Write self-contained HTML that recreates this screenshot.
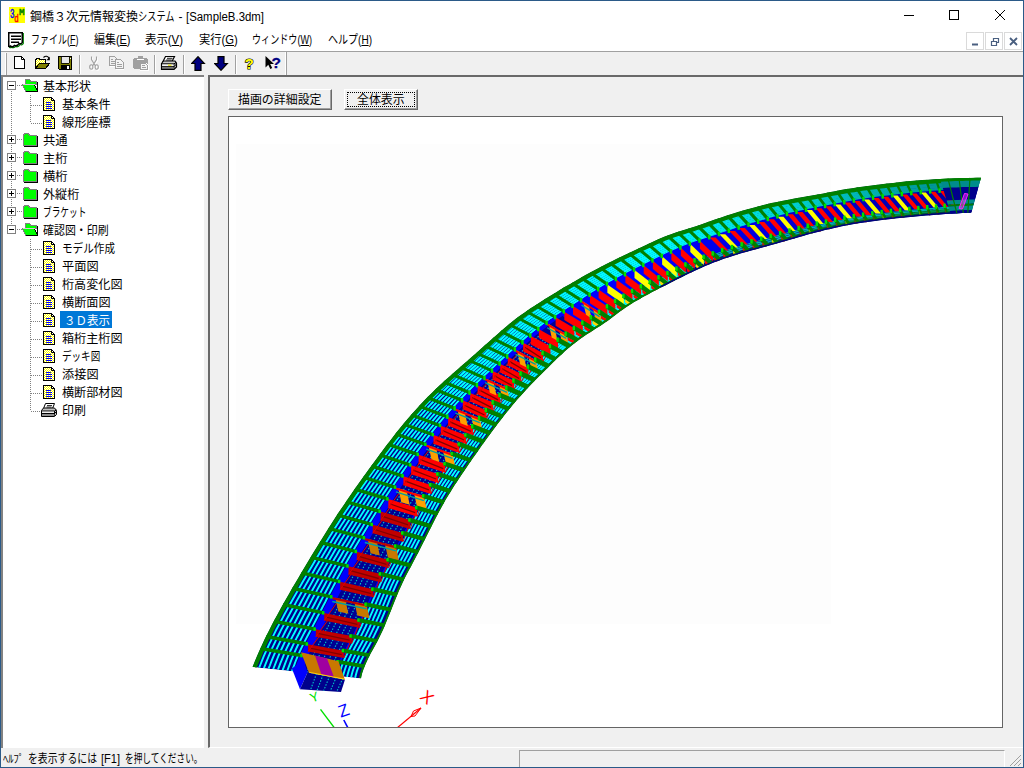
<!DOCTYPE html>
<html lang="ja"><head><meta charset="utf-8"><title>鋼橋３次元情報変換システム - [SampleB.3dm]</title>
<style>
*{box-sizing:border-box;margin:0;padding:0}
html,body{width:1024px;height:768px;overflow:hidden;background:#f0f0f0}
body{font-family:"Liberation Sans","Noto Sans CJK JP",sans-serif;font-size:12px;color:#000;position:relative}
.abs{position:absolute}
.tx{position:absolute;white-space:nowrap;line-height:18px;height:18px;transform-origin:0 50%;display:inline-block}
.tx u{text-decoration:underline;text-underline-offset:1px}
#frame{position:absolute;left:0;top:0;width:1024px;height:768px;border:1px solid #2b5a88;pointer-events:none}
#title{position:absolute;left:1px;top:1px;width:1022px;height:30px;background:#fff}
#menu{position:absolute;left:1px;top:31px;width:1022px;height:20px;background:#fff}
#tbline{position:absolute;left:1px;top:51px;width:1022px;height:1px;background:#a0a0a0}
.sep{position:absolute;top:55px;width:2px;height:19px;border-left:1px solid #a0a0a0;border-right:1px solid #fff}
#tree{position:absolute;left:1px;top:75px;width:203px;height:673px;background:#fff;border-top:2px solid #828282;border-left:2px solid #828282}
#right{position:absolute;left:208px;top:75px;width:815px;height:673px;background:#f0f0f0;border-top:2px solid #696969;border-left:2px solid #696969;border-bottom:1px solid #fff}
#view{position:absolute;left:228px;top:116px;width:775px;height:612px;background:#fff;border:1px solid #646464;overflow:hidden}
.btn{position:absolute;height:21px;background:#f0f0f0;border-top:1px solid #fff;border-left:1px solid #fff;border-right:1px solid #696969;border-bottom:1px solid #696969}
.btn i{position:absolute;left:0;top:0;right:0;bottom:0;border-right:1px solid #a0a0a0;border-bottom:1px solid #a0a0a0}
#status{position:absolute;left:1px;top:748px;width:1022px;height:19px;background:#f0f0f0}
</style></head><body>
<svg width="0" height="0" style="position:absolute"><defs>
<pattern id="hy" width="2" height="2" patternUnits="userSpaceOnUse"><rect width="2" height="2" fill="#ffff00"/><rect width="1" height="1" fill="#fff"/><rect x="1" y="1" width="1" height="1" fill="#fff"/></pattern>
<g id="ic-menu"><path d="M1.750 1.750H15.250V11.500C14.500 13 13 13 12 12.500C11 14.500 9 15 7.500 14.500C6.500 16 4.500 16 3.500 15C2.800 15.800 2.200 15.800 1.750 15.500Z" fill="none" stroke="#008000" stroke-width="1.300"/><path d="M.75.750H14.250V10.500C13.500 12 12 12 11 11.500C10 13.500 8 14 6.500 13.500C5.500 15 3.500 15 2.500 14C1.800 14.800 1.200 14.800.750 14.500Z" fill="#fff" stroke="#000" stroke-width="1.500"/><path d="M3 4.250H13M3 7.250H13M3 10.250H11" stroke="#000" stroke-width="1.500"/></g>
<g id="ic-mdi"><rect x=".5" y=".5" width="17" height="17" fill="#fff" stroke="#dadada"/><rect x="19.5" y=".5" width="17" height="17" fill="#fff" stroke="#dadada"/><rect x="38.500" y=".5" width="17" height="17" fill="#fff" stroke="#dadada"/><path d="M6 12.500h6" stroke="#4a5f80" stroke-width="2"/><path d="M25.500 9.500h5v4h-5zM27.500 9v-2.500h5v4h-2" fill="none" stroke="#4a5f80" stroke-width="1.200"/><path d="M44 6l7 7M51 6l-7 7" stroke="#4a5f80" stroke-width="1.800"/></g>
<g id="ic-grip" stroke="#a0a0a0" stroke-width="1"><path d="M13 2L2 13M13 6L6 13M13 10L10 13"/></g>
<g id="ic-open" shape-rendering="crispEdges"><path d="M3.500 1.500h4l1 1.500h6v3.500h-11z" fill="#00ff00" stroke="#808080"/><path d="M15.500 4v9.500h-11" fill="none" stroke="#000" stroke-width="1.500"/><path d="M0.500 6.500h12l3 7h-12z" fill="#00ff00" stroke="#808080"/><path d="M12.500 6.500l3 7h-12" fill="none" stroke="#000"/><path d="M1 6.500h11.500" stroke="#d8c8d8"/></g>
<g id="ic-closed" shape-rendering="crispEdges"><path d="M1.500 3.500l1-2h4l1 2h7v9.500h-13z" fill="#00ff00" stroke="#808080"/><path d="M15.500 4v10h-13.500" fill="none" stroke="#000"/></g>
<g id="ic-doc" shape-rendering="crispEdges"><path d="M.5.500h8l3 3v10h-11z" fill="url(#hy)" stroke="#000"/><path d="M8.500.5l3 3h-3z" fill="#fff" stroke="#000" shape-rendering="auto"/><path d="M3 5.500h5M3 7.500h6M3 9.500h6M3 11.500h6" stroke="#0000ff"/></g>
<g id="ic-print"><path d="M5.500 1.500h9l-2 5h-9z" fill="#fff" stroke="#000"/><path d="M7 3.500h5M6.500 5h5" stroke="#000" stroke-width=".8"/><path d="M1.500 8.500l2-2.500h11l2 2.500v4l-2 2h-13z" fill="#c0c0c0" stroke="#000"/><path d="M1.500 9h13l2-1M1.500 11.500h13l2-2M14.500 9v5" stroke="#000" fill="none"/><path d="M2 10.200h12" stroke="#fff"/><path d="M2 13h12.500" stroke="#808080" stroke-width="1.600"/></g>
<g id="tb-new" shape-rendering="crispEdges"><path d="M.5.500h7l3 3v9h-10z" fill="#fff" stroke="#000"/><path d="M7.500.5l3 3h-3z" fill="#fff" stroke="#000" shape-rendering="auto"/></g>
<g id="tb-open"><g shape-rendering="crispEdges"><path d="M.5 13.500v-9h1v-1h3v1h6v3" fill="url(#hy)" stroke="#000"/><path d="M.5 13.500h10l4.500-5.500h-10.500z" fill="#808000" stroke="#000"/></g><path d="M8.500 2.500c2-2 4.500-1.500 5.500 1" fill="none" stroke="#000" stroke-width="1.100"/><path d="M14.800 1.800v3.400h-3.400z" fill="#000"/></g>
<g id="tb-save" shape-rendering="crispEdges"><path d="M.5.500h13v13h-12l-1-1z" fill="#808000" stroke="#000"/><rect x="3" y="1" width="8" height="5.500" fill="#e8e8e8"/><path d="M3 1v6h8v-6" fill="none" stroke="#000" stroke-width=".8"/><rect x="12" y="1.500" width="1" height="1" fill="#fff"/><rect x="3" y="8.500" width="9" height="5" fill="#000"/><rect x="9" y="9.500" width="2" height="3" fill="#fff"/></g>
<g id="tb-cut" fill="none" stroke-width="1.100"><g stroke="#fff" transform="translate(1,1)"><path d="M2.500.5v3l4 6.500M7.500.5v3l-4 6.500"/><ellipse cx="2.300" cy="11" rx="1.600" ry="2.200"/><ellipse cx="7.700" cy="11" rx="1.600" ry="2.200"/></g><g stroke="#a0a0a0"><path d="M2.500.5v3l4 6.500M7.500.5v3l-4 6.500"/><ellipse cx="2.300" cy="11" rx="1.600" ry="2.200"/><ellipse cx="7.700" cy="11" rx="1.600" ry="2.200"/></g></g>
<g id="tb-copy" shape-rendering="crispEdges"><path d="M1.500 1.500h5l2 2v7h-7z" fill="#f8f8f8" stroke="#fff"/><path d="M.5.500h5l2 2v7h-7z" fill="#f0f0f0" stroke="#a0a0a0"/><path d="M2 3.500h2M2 5.500h4M2 7.500h4" stroke="#a0a0a0"/><path d="M7.500 4.500h5l2 2v7h-7z" fill="#fff" stroke="#fff"/><path d="M6.500 3.500h5l3 3v6h-8z" fill="#f4f4f4" stroke="#a0a0a0"/><path d="M8 6.500h2M8 8.500h5M8 10.500h5" stroke="#a0a0a0"/></g>
<g id="tb-paste" shape-rendering="crispEdges"><path d="M1 2h13v10.500h-13z" fill="#a0a0a0"/><path d="M0 3h15v8.500h-15z" fill="#a0a0a0"/><rect x="5" y="0" width="5" height="2" fill="#a0a0a0"/><rect x="4" y="3" width="6.500" height="1.200" fill="#fff"/><path d="M7.500 7.500h5l2 2v4h-7z" fill="#f4f4f4" stroke="#fff" stroke-width="2"/><path d="M7.500 7.500h5l2 2v4h-7z" fill="#f4f4f4" stroke="#a0a0a0"/><path d="M9 9.500h3M9 11.500h4" stroke="#a0a0a0"/></g>
<g id="tb-print"><path d="M5.500 1.500h9l-2.500 5h-9z" fill="#fff" stroke="#000" stroke-width="1.200"/><path d="M7 3.300h5.500M6.200 5h5.500" stroke="#000" stroke-width=".9"/><path d="M1.500 8.500l2-2.500h11.500l1.500 2.500v3.500l-2.500 2.500h-12.500z" fill="#c8c8c8" stroke="#000" stroke-width="1.200"/><path d="M1.500 8.800h12.500l2.500-1.500M1.500 11.700h12.500l2.500-2.700M14 9v5" stroke="#000" fill="none"/><path d="M2.200 10.200h11.500" stroke="#fff" stroke-width="1.200"/><path d="M8 10.200h3.500" stroke="#e8e000" stroke-width="1.200"/><path d="M2 13.200h12" stroke="#606060" stroke-width="1.600"/></g>
<g id="tb-up"><path d="M7 .7l6.300 6.800h-3.300v6.800h-6v-6.800h-3.300z" fill="#000080" stroke="#000" stroke-width="1.200" stroke-linejoin="miter"/></g>
<g id="tb-down"><path d="M7 14.300l6.300-6.800h-3.300v-6.800h-6v6.800h-3.300z" fill="#000080" stroke="#000" stroke-width="1.200" stroke-linejoin="miter"/></g>
<g id="tb-help"><text x="0.800" y="13" font-family="Liberation Sans,sans-serif" font-weight="bold" font-size="15.5" fill="#ffff00" stroke="#000" stroke-width="1.200" paint-order="stroke" textLength="9" lengthAdjust="spacingAndGlyphs">?</text></g>
<g id="tb-ctx"><path d="M1.500 1v11.500l2.800-2.800 2 4.300 1.900-.9-2-4.200h3.800z" fill="#000"/><text x="7.500" y="12.500" font-family="Liberation Sans,sans-serif" font-weight="bold" font-size="15.500" fill="#000080" stroke="#000080" stroke-width=".3">?</text></g>

</defs></svg>
<div id="title">
<svg class="abs" style="left:8px;top:6px" width="16" height="16" viewBox="0 0 16 16"><rect width="16" height="16" fill="#ffff00"/><text x="1" y="11" font-family="Liberation Mono,monospace" font-size="12" fill="#0000ff" stroke="#0000ff" stroke-width=".5" textLength="4.5" lengthAdjust="spacingAndGlyphs">3</text><text x="5.2" y="15" font-family="Liberation Mono,monospace" font-size="11" fill="#ff0000" stroke="#ff0000" stroke-width=".5" textLength="4.5" lengthAdjust="spacingAndGlyphs">d</text><text x="10" y="8" font-family="Liberation Mono,monospace" font-size="9.5" fill="#008000" stroke="#008000" stroke-width=".5" textLength="5.5" lengthAdjust="spacingAndGlyphs">M</text></svg>
<svg class="abs" style="left:889px;top:-1px" width="132" height="30" viewBox="0 0 132 30" fill="none" stroke="#000" stroke-width="1"><path d="M14 15.5h10"/><rect x="59.5" y="10.5" width="9" height="9"/><path d="M105 10l10 10M115 10l-10 10"/></svg>
</div>
<div id="menu">
<svg class="abs" style="left:7px;top:1px" width="18" height="18"><use href="#ic-menu"/></svg>
<svg class="abs" style="left:965px;top:1px" width="56" height="19"><use href="#ic-mdi"/></svg>
</div>
<div id="tbline"></div>
<div class="abs" style="left:5px;top:53px;width:2px;height:22px;border-left:1px solid #fff;border-right:1px solid #a0a0a0"></div>
<svg class="abs" style="left:14px;top:56px" width="12" height="14"><use href="#tb-new"/></svg>
<svg class="abs" style="left:35px;top:55px" width="17" height="15"><use href="#tb-open"/></svg>
<svg class="abs" style="left:58px;top:56px" width="15" height="14"><use href="#tb-save"/></svg>
<svg class="abs" style="left:89px;top:56px" width="11" height="15"><use href="#tb-cut"/></svg>
<svg class="abs" style="left:109px;top:56px" width="17" height="15"><use href="#tb-copy"/></svg>
<svg class="abs" style="left:133px;top:56px" width="16" height="15"><use href="#tb-paste"/></svg>
<svg class="abs" style="left:160px;top:55px" width="18" height="16"><use href="#tb-print"/></svg>
<svg class="abs" style="left:191px;top:56px" width="15" height="15"><use href="#tb-up"/></svg>
<svg class="abs" style="left:214px;top:56px" width="15" height="15"><use href="#tb-down"/></svg>
<svg class="abs" style="left:244px;top:56px" width="11" height="14"><use href="#tb-help"/></svg>
<svg class="abs" style="left:264px;top:55px" width="18" height="16"><use href="#tb-ctx"/></svg>
<div class="sep" style="left:79px"></div>
<div class="sep" style="left:154px"></div>
<div class="sep" style="left:183px"></div>
<div class="sep" style="left:235px"></div>
<div class="abs" style="left:285px;top:52px;width:2px;height:23px;border-left:1px solid #fff;border-right:1px solid #a0a0a0"></div>
<div id="tree"></div>
<div id="right"></div>
<svg class="abs" style="left:0;top:0" width="210" height="440" shape-rendering="crispEdges"><g stroke="#808080" stroke-width="1" stroke-dasharray="1 1"><line x1="11.5" y1="91" x2="11.5" y2="225"/><line x1="30.5" y1="95" x2="30.5" y2="122"/><line x1="30.5" y1="239" x2="30.5" y2="410"/><line x1="17" y1="85.5" x2="22" y2="85.5"/><line x1="31" y1="105.5" x2="42" y2="105.5"/><line x1="31" y1="123.5" x2="42" y2="123.5"/><line x1="17" y1="139.5" x2="22" y2="139.5"/><line x1="17" y1="157.5" x2="22" y2="157.5"/><line x1="17" y1="175.5" x2="22" y2="175.5"/><line x1="17" y1="193.5" x2="22" y2="193.5"/><line x1="17" y1="211.5" x2="22" y2="211.5"/><line x1="17" y1="229.5" x2="22" y2="229.5"/><line x1="31" y1="249.5" x2="42" y2="249.5"/><line x1="31" y1="267.5" x2="42" y2="267.5"/><line x1="31" y1="285.5" x2="42" y2="285.5"/><line x1="31" y1="303.5" x2="42" y2="303.5"/><line x1="31" y1="321.5" x2="42" y2="321.5"/><line x1="31" y1="339.5" x2="42" y2="339.5"/><line x1="31" y1="357.5" x2="42" y2="357.5"/><line x1="31" y1="375.5" x2="42" y2="375.5"/><line x1="31" y1="393.5" x2="42" y2="393.5"/><line x1="31" y1="411.5" x2="42" y2="411.5"/></g></svg>
<svg class="abs" style="left:7px;top:81px" width="9" height="9" shape-rendering="crispEdges"><rect x=".5" y=".5" width="8" height="8" fill="#fff" stroke="#808080"/><path d="M2 4.5h5" stroke="#000"/></svg>
<svg class="abs" style="left:22px;top:78px" width="17" height="16"><use href="#ic-open"/></svg>
<svg class="abs" style="left:43px;top:97px" width="13" height="15"><use href="#ic-doc"/></svg>
<svg class="abs" style="left:43px;top:115px" width="13" height="15"><use href="#ic-doc"/></svg>
<svg class="abs" style="left:7px;top:135px" width="9" height="9" shape-rendering="crispEdges"><rect x=".5" y=".5" width="8" height="8" fill="#fff" stroke="#808080"/><path d="M2 4.5h5" stroke="#000"/><path d="M4.5 2v5" stroke="#000"/></svg>
<svg class="abs" style="left:22px;top:132px" width="17" height="16"><use href="#ic-closed"/></svg>
<svg class="abs" style="left:7px;top:153px" width="9" height="9" shape-rendering="crispEdges"><rect x=".5" y=".5" width="8" height="8" fill="#fff" stroke="#808080"/><path d="M2 4.5h5" stroke="#000"/><path d="M4.5 2v5" stroke="#000"/></svg>
<svg class="abs" style="left:22px;top:150px" width="17" height="16"><use href="#ic-closed"/></svg>
<svg class="abs" style="left:7px;top:171px" width="9" height="9" shape-rendering="crispEdges"><rect x=".5" y=".5" width="8" height="8" fill="#fff" stroke="#808080"/><path d="M2 4.5h5" stroke="#000"/><path d="M4.5 2v5" stroke="#000"/></svg>
<svg class="abs" style="left:22px;top:168px" width="17" height="16"><use href="#ic-closed"/></svg>
<svg class="abs" style="left:7px;top:189px" width="9" height="9" shape-rendering="crispEdges"><rect x=".5" y=".5" width="8" height="8" fill="#fff" stroke="#808080"/><path d="M2 4.5h5" stroke="#000"/><path d="M4.5 2v5" stroke="#000"/></svg>
<svg class="abs" style="left:22px;top:186px" width="17" height="16"><use href="#ic-closed"/></svg>
<svg class="abs" style="left:7px;top:207px" width="9" height="9" shape-rendering="crispEdges"><rect x=".5" y=".5" width="8" height="8" fill="#fff" stroke="#808080"/><path d="M2 4.5h5" stroke="#000"/><path d="M4.5 2v5" stroke="#000"/></svg>
<svg class="abs" style="left:22px;top:204px" width="17" height="16"><use href="#ic-closed"/></svg>
<svg class="abs" style="left:7px;top:225px" width="9" height="9" shape-rendering="crispEdges"><rect x=".5" y=".5" width="8" height="8" fill="#fff" stroke="#808080"/><path d="M2 4.5h5" stroke="#000"/></svg>
<svg class="abs" style="left:22px;top:222px" width="17" height="16"><use href="#ic-open"/></svg>
<svg class="abs" style="left:43px;top:241px" width="13" height="15"><use href="#ic-doc"/></svg>
<svg class="abs" style="left:43px;top:259px" width="13" height="15"><use href="#ic-doc"/></svg>
<svg class="abs" style="left:43px;top:277px" width="13" height="15"><use href="#ic-doc"/></svg>
<svg class="abs" style="left:43px;top:295px" width="13" height="15"><use href="#ic-doc"/></svg>
<svg class="abs" style="left:43px;top:313px" width="13" height="15"><use href="#ic-doc"/></svg>
<div class="abs" style="left:60px;top:311px;width:52px;height:17px;background:#0078d7"></div>
<svg class="abs" style="left:43px;top:331px" width="13" height="15"><use href="#ic-doc"/></svg>
<svg class="abs" style="left:43px;top:349px" width="13" height="15"><use href="#ic-doc"/></svg>
<svg class="abs" style="left:43px;top:367px" width="13" height="15"><use href="#ic-doc"/></svg>
<svg class="abs" style="left:43px;top:385px" width="13" height="15"><use href="#ic-doc"/></svg>
<svg class="abs" style="left:40px;top:402px" width="18" height="16"><use href="#ic-print"/></svg>
<div class="btn" style="left:228px;top:89px;width:104px"><i></i></div>
<div class="btn" style="left:344px;top:89px;width:74px"><i></i><div style="position:absolute;left:2px;top:2px;right:2px;bottom:2px;border:1px dotted #000"></div></div>
<div id="view">
<svg class="abs" style="left:0;top:0" width="773" height="610" viewBox="0 0 773 610"><defs><linearGradient id="gcy" gradientUnits="userSpaceOnUse" x1="421" y1="0" x2="731" y2="0"><stop offset="0" stop-color="#00ffff"/><stop offset=".4" stop-color="#00d8d8"/><stop offset="1" stop-color="#008c8c"/></linearGradient>
<linearGradient id="gbl" gradientUnits="userSpaceOnUse" x1="421" y1="0" x2="731" y2="0"><stop offset="0" stop-color="#0000ff"/><stop offset="1" stop-color="#0000a0"/></linearGradient></defs>
<rect x="7" y="27" width="595" height="480" fill="#fdfdfd"/>
<clipPath id="dk"><polygon points="23.5,550 25.7,544.5 28,539.1 30.3,533.7 32.7,528.4 35.2,523.1 37.8,517.8 40.5,512.5 43.1,507.3 45.9,502.1 48.7,496.9 51.5,491.8 54.4,486.6 57.3,481.5 60.2,476.4 63.1,471.3 66.1,466.2 69.1,461.2 72.1,456.1 75.1,451 78.1,446 81.1,440.9 84.1,435.9 87.2,430.9 90.3,425.9 93.4,420.9 96.5,415.9 99.6,410.9 102.8,406 106,401.1 109.2,396.1 112.5,391.3 115.8,386.4 119.1,381.5 122.4,376.7 125.8,371.8 129.2,367 132.6,362.2 136,357.5 139.4,352.7 142.9,347.9 146.4,343.2 149.9,338.5 153.4,333.7 156.9,329 160.5,324.4 164.1,319.7 167.7,315.1 171.4,310.5 175.1,306 178.9,301.5 182.8,297 186.7,292.7 190.7,288.3 194.7,284 198.8,279.8 203,275.7 207.2,271.6 211.5,267.6 215.8,263.6 220.2,259.7 224.6,255.8 229,251.9 233.4,248 237.9,244.2 242.3,240.3 246.7,236.4 251.1,232.5 255.5,228.6 259.9,224.7 264.3,220.8 268.7,216.9 273.1,213 277.6,209.2 282.1,205.4 286.7,201.8 291.5,198.3 296.3,194.9 301.1,191.6 306,188.4 311,185.2 316,182.1 320.9,179 326,175.9 331,172.8 336,169.8 341.1,166.9 346.2,163.9 351.3,161 356.4,158.1 361.6,155.3 366.8,152.5 372,149.7 377.2,147 382.4,144.4 387.7,141.8 393,139.2 398.3,136.7 403.6,134.2 408.9,131.7 414.3,129.2 419.6,126.7 424.9,124.2 430.3,121.8 435.7,119.5 441.2,117.4 446.7,115.5 452.3,113.7 458,111.9 463.6,110.2 469.2,108.4 474.7,106.5 480.3,104.6 485.8,102.6 491.4,100.7 497,98.8 502.6,97 508.2,95.3 513.8,93.6 519.5,92 525.1,90.4 530.8,88.9 536.5,87.5 542.2,86.1 548,84.9 553.8,83.7 559.5,82.7 565.3,81.6 571.1,80.6 576.9,79.6 582.7,78.5 588.5,77.5 594.3,76.4 600,75.3 605.8,74.2 611.6,73.1 617.4,72.1 623.2,71.2 629,70.3 634.8,69.5 640.6,68.7 646.5,67.9 652.3,67.2 658.2,66.5 664,65.9 669.8,65.2 675.7,64.6 681.5,64.1 687.4,63.6 693.3,63.1 699.1,62.7 705,62.3 710.9,62 716.7,61.7 722.6,61.4 728.5,61.2 734.4,61 740.2,60.9 746.1,60.8 752,60.8 742.4,95.6 740.5,95.7 738.5,95.8 736.3,95.9 733.6,96.1 730.3,96.2 726.1,96.5 721.5,96.8 716.7,97.1 711.9,97.4 707,97.8 702.1,98.2 697,98.6 691.9,99 686.8,99.5 681.5,100 676.3,100.5 671,101 665.6,101.6 660.3,102.2 654.9,102.8 649.5,103.4 644.1,104.2 638.7,104.9 633.2,105.7 627.8,106.6 622.5,107.5 617.1,108.5 611.8,109.6 606.6,110.7 601.3,111.9 596.1,113.1 591,114.4 585.8,115.7 580.7,117.1 575.6,118.5 570.5,119.9 565.3,121.4 560.1,123 554.8,124.5 549.5,126 544.2,127.5 538.8,129 533.4,130.5 527.9,132 522.4,133.5 516.9,135 511.4,136.6 506,138.2 500.7,139.9 495.5,141.6 490.4,143.4 485.4,145.3 480.5,147.3 475.7,149.3 470.8,151.5 465.9,153.7 461,156 456.2,158.3 451.4,160.7 446.6,163.1 441.9,165.5 437.1,167.9 432.4,170.3 427.7,172.8 422.9,175.3 418.3,177.8 413.6,180.3 409,182.9 404.4,185.6 399.9,188.4 395.6,191.3 391.4,194.2 387.3,197.3 383.2,200.4 379.1,203.5 374.8,206.5 370.3,209.4 365.8,212.3 361.3,215.2 356.8,218.1 352.5,221.1 348.2,224.3 344,227.5 339.9,230.8 335.9,234.3 332,237.9 328.1,241.5 324.3,245.2 320.6,248.9 316.8,252.7 313,256.4 309.2,260.2 305.5,263.9 301.9,267.7 298.3,271.5 294.8,275.4 291.3,279.2 287.9,283.1 284.5,287.1 281.3,291 278,295 274.8,299.1 271.6,303.2 268.4,307.3 265.3,311.5 262.1,315.7 259,320 255.9,324.3 252.8,328.6 249.7,333 246.6,337.4 243.5,341.8 240.4,346.3 237.4,350.7 234.3,355.2 231.3,359.7 228.3,364.2 225.3,368.8 222.4,373.4 219.6,378 216.8,382.6 214.2,387.3 211.6,392 209,396.7 206.5,401.4 204.1,406.2 201.7,411 199.3,415.7 196.9,420.5 194.5,425.3 192.1,430.1 189.6,434.9 187.2,439.6 184.6,444.4 182.1,449.2 179.5,453.9 177,458.7 174.6,463.5 172.4,468.4 170.2,473.2 168.2,478.1 166.2,483 164.2,487.9 162.3,492.8 160.3,497.7 158.3,502.6 156.3,507.5 154.2,512.4 151.9,517.3 149.6,522.1 147,526.9 144.4,531.8 141.7,536.6 139.2,541.5 136.9,546.5 134.8,551.5 133.1,556.6 132,561.4 132,561.4"/></clipPath><g clip-path="url(#dk)">
<polygon points="23.5,550 25.7,544.5 28,539.1 30.3,533.7 32.7,528.4 35.2,523.1 37.8,517.8 40.5,512.5 43.1,507.3 45.9,502.1 48.7,496.9 51.5,491.8 54.4,486.6 57.3,481.5 60.2,476.4 63.1,471.3 66.1,466.2 69.1,461.2 72.1,456.1 75.1,451 78.1,446 81.1,440.9 84.1,435.9 87.2,430.9 90.3,425.9 93.4,420.9 96.5,415.9 99.6,410.9 102.8,406 106,401.1 109.2,396.1 112.5,391.3 115.8,386.4 119.1,381.5 122.4,376.7 125.8,371.8 129.2,367 132.6,362.2 136,357.5 139.4,352.7 142.9,347.9 146.4,343.2 149.9,338.5 153.4,333.7 156.9,329 160.5,324.4 164.1,319.7 167.7,315.1 171.4,310.5 175.1,306 178.9,301.5 182.8,297 186.7,292.7 190.7,288.3 194.7,284 198.8,279.8 203,275.7 207.2,271.6 211.5,267.6 215.8,263.6 220.2,259.7 224.6,255.8 229,251.9 233.4,248 237.9,244.2 242.3,240.3 246.7,236.4 251.1,232.5 255.5,228.6 259.9,224.7 264.3,220.8 268.7,216.9 273.1,213 277.6,209.2 282.1,205.4 286.7,201.8 291.5,198.3 296.3,194.9 301.1,191.6 306,188.4 311,185.2 316,182.1 320.9,179 326,175.9 331,172.8 336,169.8 341.1,166.9 346.2,163.9 351.3,161 356.4,158.1 361.6,155.3 366.8,152.5 372,149.7 377.2,147 382.4,144.4 387.7,141.8 393,139.2 398.3,136.7 403.6,134.2 408.9,131.7 414.3,129.2 419.6,126.7 424.9,124.2 430.3,121.8 435.7,119.5 441.2,117.4 446.7,115.5 452.3,113.7 458,111.9 463.6,110.2 469.2,108.4 474.7,106.5 480.3,104.6 485.8,102.6 491.4,100.7 497,98.8 502.6,97 508.2,95.3 513.8,93.6 519.5,92 525.1,90.4 530.8,88.9 536.5,87.5 542.2,86.1 548,84.9 553.8,83.7 559.5,82.7 565.3,81.6 571.1,80.6 576.9,79.6 582.7,78.5 588.5,77.5 594.3,76.4 600,75.3 605.8,74.2 611.6,73.1 617.4,72.1 623.2,71.2 629,70.3 634.8,69.5 640.6,68.7 646.5,67.9 652.3,67.2 658.2,66.5 664,65.9 669.8,65.2 675.7,64.6 681.5,64.1 687.4,63.6 693.3,63.1 699.1,62.7 705,62.3 710.9,62 716.7,61.7 722.6,61.4 728.5,61.2 734.4,61 740.2,60.9 746.1,60.8 752,60.8 742.4,95.6 740.5,95.7 738.5,95.8 736.3,95.9 733.6,96.1 730.3,96.2 726.1,96.5 721.5,96.8 716.7,97.1 711.9,97.4 707,97.8 702.1,98.2 697,98.6 691.9,99 686.8,99.5 681.5,100 676.3,100.5 671,101 665.6,101.6 660.3,102.2 654.9,102.8 649.5,103.4 644.1,104.2 638.7,104.9 633.2,105.7 627.8,106.6 622.5,107.5 617.1,108.5 611.8,109.6 606.6,110.7 601.3,111.9 596.1,113.1 591,114.4 585.8,115.7 580.7,117.1 575.6,118.5 570.5,119.9 565.3,121.4 560.1,123 554.8,124.5 549.5,126 544.2,127.5 538.8,129 533.4,130.5 527.9,132 522.4,133.5 516.9,135 511.4,136.6 506,138.2 500.7,139.9 495.5,141.6 490.4,143.4 485.4,145.3 480.5,147.3 475.7,149.3 470.8,151.5 465.9,153.7 461,156 456.2,158.3 451.4,160.7 446.6,163.1 441.9,165.5 437.1,167.9 432.4,170.3 427.7,172.8 422.9,175.3 418.3,177.8 413.6,180.3 409,182.9 404.4,185.6 399.9,188.4 395.6,191.3 391.4,194.2 387.3,197.3 383.2,200.4 379.1,203.5 374.8,206.5 370.3,209.4 365.8,212.3 361.3,215.2 356.8,218.1 352.5,221.1 348.2,224.3 344,227.5 339.9,230.8 335.9,234.3 332,237.9 328.1,241.5 324.3,245.2 320.6,248.9 316.8,252.7 313,256.4 309.2,260.2 305.5,263.9 301.9,267.7 298.3,271.5 294.8,275.4 291.3,279.2 287.9,283.1 284.5,287.1 281.3,291 278,295 274.8,299.1 271.6,303.2 268.4,307.3 265.3,311.5 262.1,315.7 259,320 255.9,324.3 252.8,328.6 249.7,333 246.6,337.4 243.5,341.8 240.4,346.3 237.4,350.7 234.3,355.2 231.3,359.7 228.3,364.2 225.3,368.8 222.4,373.4 219.6,378 216.8,382.6 214.2,387.3 211.6,392 209,396.7 206.5,401.4 204.1,406.2 201.7,411 199.3,415.7 196.9,420.5 194.5,425.3 192.1,430.1 189.6,434.9 187.2,439.6 184.6,444.4 182.1,449.2 179.5,453.9 177,458.7 174.6,463.5 172.4,468.4 170.2,473.2 168.2,478.1 166.2,483 164.2,487.9 162.3,492.8 160.3,497.7 158.3,502.6 156.3,507.5 154.2,512.4 151.9,517.3 149.6,522.1 147,526.9 144.4,531.8 141.7,536.6 139.2,541.5 136.9,546.5 134.8,551.5 133.1,556.6 132,561.4 132,561.4" fill="#00008c"/>
<polyline points="30.2,550.7 31.7,547 33.2,543.2 34.8,539.2 36.5,535.3 38.3,531.5 40,527.6 41.9,523.8 43.7,519.9 45.6,516.1 47.5,512.3 49.5,508.6 51.5,504.8 53.5,501.1 55.5,497.3 57.5,493.6 59.6,489.9 61.6,486.2 63.7,482.5 65.8,478.8 67.9,475.1 70,471.4 72.1,467.7 74.2,464 76.3,460.4 78.4,456.7 80.6,453 82.7,449.4 84.9,445.7 87,442.1 89.2,438.4 91.4,434.8 93.6,431.1 95.8,427.5 98,423.9 100.3,420.3 102.5,416.7 104.8,413.1 107,409.5 109.3,405.9 111.6,402.3 113.9,398.8 116.2,395.2 118.6,391.7 120.9,388.2 123.3,384.6 125.6,381.1 128,377.6 130.4,374.1 132.8,370.6 135.2,367.1 137.7,363.6 140.1,360.2 142.6,356.7 145.1,353.3 147.5,349.8 150,346.4 152.5,343 155.1,339.5 157.6,336.1 160.1,332.7 162.7,329.3 165.3,325.9 167.9,322.6 170.5,319.2 173.1,315.9 175.7,312.6 178.4,309.3 181.1,306 183.8,302.7 186.6,299.5 189.4,296.3 192.2,293.1 195.1,290 197.9,286.9 200.9,283.8 203.8,280.8 206.8,277.8 209.8,274.8" fill="none" stroke="url(#gcy)" stroke-width="1.9"/>
<polyline points="34.9,551.2 36.3,547.6 37.8,543.9 39.4,540 41,536.1 42.7,532.2 44.5,528.4 46.3,524.6 48.2,520.7 50.1,517 52,513.2 54,509.4 56,505.7 57.9,501.9 59.9,498.2 61.9,494.5 64,490.8 66,487.1 68,483.4 70.1,479.7 72.2,476 74.2,472.3 76.3,468.6 78.4,465 80.5,461.3 82.6,457.6 84.7,454 86.8,450.3 88.9,446.7 91,443 93.2,439.4 95.4,435.8 97.6,432.1 99.8,428.5 102,424.9 104.2,421.3 106.4,417.7 108.6,414.1 110.9,410.5 113.1,407 115.4,403.4 117.7,399.8 120,396.3 122.3,392.7 124.6,389.2 126.9,385.7 129.3,382.2 131.6,378.7 134,375.2 136.4,371.7 138.8,368.2 141.2,364.7 143.6,361.3 146.1,357.8 148.5,354.4 151,350.9 153.5,347.5 155.9,344.1 158.4,340.6 161,337.2 163.5,333.8 166,330.4 168.6,327.1 171.1,323.7 173.7,320.4 176.4,317 179,313.7 181.6,310.4 184.3,307.2 187,303.9 189.8,300.7 192.5,297.5 195.3,294.3 198.1,291.2 201,288.1 203.9,285 206.8,282 209.8,279 212.8,276" fill="none" stroke="url(#gcy)" stroke-width="1.9"/>
<polyline points="39.5,551.7 40.9,548.3 42.3,544.6 43.9,540.7 45.5,536.9 47.2,533 49,529.2 50.8,525.4 52.7,521.6 54.6,517.8 56.5,514 58.5,510.3 60.4,506.5 62.4,502.8 64.4,499.1 66.4,495.4 68.4,491.7 70.4,488 72.4,484.3 74.4,480.6 76.4,476.9 78.5,473.2 80.5,469.6 82.6,465.9 84.6,462.3 86.7,458.6 88.8,454.9 90.9,451.3 93,447.6 95.1,444 97.2,440.4 99.4,436.8 101.5,433.1 103.7,429.5 105.9,425.9 108.1,422.3 110.3,418.7 112.5,415.2 114.7,411.6 117,408 119.2,404.4 121.5,400.9 123.7,397.3 126,393.8 128.3,390.3 130.6,386.8 132.9,383.2 135.3,379.7 137.6,376.2 140,372.8 142.3,369.3 144.7,365.8 147.1,362.3 149.5,358.9 152,355.4 154.4,352 156.9,348.6 159.3,345.2 161.8,341.8 164.3,338.3 166.8,335 169.3,331.6 171.9,328.2 174.4,324.9 177,321.5 179.6,318.2 182.2,314.9 184.9,311.6 187.5,308.3 190.2,305.1 192.9,301.9 195.7,298.7 198.4,295.5 201.2,292.4 204,289.3 206.9,286.2 209.8,283.2 212.7,280.2 215.7,277.2" fill="none" stroke="url(#gcy)" stroke-width="1.9"/>
<polyline points="44.2,552.2 45.5,549 46.9,545.4 48.4,541.5 50,537.6 51.7,533.8 53.5,530 55.3,526.2 57.2,522.4 59.1,518.6 61,514.8 62.9,511.1 64.9,507.4 66.9,503.7 68.8,500 70.8,496.3 72.8,492.6 74.8,488.9 76.8,485.2 78.7,481.5 80.7,477.8 82.7,474.2 84.8,470.5 86.8,466.9 88.8,463.2 90.8,459.5 92.9,455.9 94.9,452.3 97,448.6 99.1,445 101.2,441.4 103.4,437.7 105.5,434.1 107.7,430.5 109.9,426.9 112,423.3 114.2,419.8 116.4,416.2 118.6,412.6 120.8,409 123,405.5 125.3,401.9 127.5,398.4 129.8,394.9 132,391.3 134.3,387.8 136.6,384.3 138.9,380.8 141.2,377.3 143.5,373.8 145.9,370.4 148.2,366.9 150.6,363.4 153,360 155.4,356.5 157.8,353.1 160.3,349.7 162.7,346.3 165.2,342.9 167.7,339.5 170.2,336.1 172.7,332.7 175.2,329.3 177.7,326 180.3,322.7 182.9,319.3 185.5,316 188.1,312.8 190.7,309.5 193.4,306.3 196.1,303 198.8,299.8 201.5,296.7 204.3,293.6 207.1,290.4 209.9,287.4 212.8,284.3 215.7,281.3 218.6,278.4" fill="none" stroke="url(#gcy)" stroke-width="1.9"/>
<polyline points="48.9,552.7 50.1,549.6 51.4,546.1 53,542.3 54.6,538.4 56.2,534.6 58,530.7 59.8,527 61.6,523.2 63.5,519.4 65.5,515.7 67.4,512 69.4,508.2 71.3,504.5 73.3,500.8 75.2,497.1 77.2,493.5 79.2,489.8 81.1,486.1 83.1,482.4 85,478.8 87,475.1 89,471.4 91,467.8 93,464.1 95,460.5 97,456.9 99,453.2 101.1,449.6 103.1,446 105.2,442.3 107.4,438.7 109.5,435.1 111.6,431.5 113.8,427.9 116,424.4 118.1,420.8 120.3,417.2 122.5,413.6 124.7,410.1 126.8,406.5 129,403 131.3,399.4 133.5,395.9 135.7,392.4 138,388.9 140.2,385.4 142.5,381.9 144.8,378.4 147.1,374.9 149.4,371.4 151.8,368 154.1,364.5 156.5,361.1 158.9,357.6 161.3,354.2 163.7,350.8 166.1,347.4 168.6,344 171,340.6 173.5,337.2 176,333.8 178.5,330.5 181,327.1 183.6,323.8 186.1,320.5 188.7,317.2 191.3,313.9 193.9,310.7 196.6,307.4 199.2,304.2 201.9,301 204.6,297.9 207.4,294.7 210.2,291.6 213,288.6 215.8,285.5 218.7,282.5 221.5,279.5" fill="none" stroke="url(#gcy)" stroke-width="1.9"/>
<polyline points="53.6,553.2 54.7,550.3 56,546.9 57.5,543 59.1,539.2 60.7,535.3 62.5,531.5 64.3,527.7 66.1,524 68,520.2 70,516.5 71.9,512.8 73.9,509.1 75.8,505.4 77.7,501.7 79.7,498 81.6,494.4 83.5,490.7 85.5,487 87.4,483.4 89.3,479.7 91.3,476 93.2,472.4 95.2,468.7 97.1,465.1 99.1,461.4 101.1,457.8 103.1,454.2 105.1,450.5 107.2,446.9 109.3,443.3 111.4,439.7 113.5,436.1 115.6,432.5 117.7,429 119.9,425.4 122,421.8 124.2,418.2 126.3,414.7 128.5,411.1 130.7,407.6 132.8,404 135,400.5 137.2,397 139.4,393.5 141.6,389.9 143.9,386.4 146.1,382.9 148.4,379.5 150.7,376 153,372.5 155.3,369 157.6,365.6 159.9,362.2 162.3,358.7 164.7,355.3 167.1,351.9 169.5,348.5 172,345.1 174.4,341.7 176.9,338.3 179.3,335 181.8,331.6 184.3,328.3 186.9,325 189.4,321.6 192,318.4 194.5,315.1 197.1,311.8 199.8,308.6 202.4,305.4 205.1,302.2 207.7,299 210.5,295.9 213.2,292.8 216,289.7 218.8,286.7 221.6,283.7 224.5,280.7" fill="none" stroke="url(#gcy)" stroke-width="1.9"/>
<polyline points="58.3,553.7 59.3,551 60.6,547.6 62,543.8 63.6,539.9 65.2,536.1 66.9,532.3 68.7,528.5 70.6,524.8 72.5,521.1 74.4,517.4 76.4,513.7 78.3,510 80.3,506.3 82.2,502.6 84.1,498.9 86,495.3 87.9,491.6 89.8,487.9 91.7,484.3 93.6,480.6 95.5,477 97.5,473.3 99.4,469.7 101.3,466 103.3,462.4 105.2,458.8 107.2,455.1 109.2,451.5 111.2,447.9 113.3,444.3 115.3,440.7 117.4,437.1 119.6,433.5 121.7,430 123.8,426.4 125.9,422.8 128.1,419.3 130.2,415.7 132.3,412.2 134.5,408.6 136.6,405.1 138.8,401.6 141,398 143.1,394.5 145.3,391 147.5,387.5 149.7,384 152,380.5 154.2,377 156.5,373.6 158.8,370.1 161.1,366.7 163.4,363.2 165.8,359.8 168.1,356.4 170.5,353 172.9,349.6 175.3,346.2 177.8,342.8 180.2,339.5 182.7,336.1 185.2,332.8 187.6,329.4 190.2,326.1 192.7,322.8 195.2,319.5 197.8,316.2 200.3,313 202.9,309.8 205.6,306.6 208.2,303.4 210.9,300.2 213.5,297.1 216.3,294 219,290.9 221.8,287.9 224.6,284.9 227.4,281.9" fill="none" stroke="url(#gcy)" stroke-width="1.9"/>
<polyline points="62.9,554.1 63.9,551.6 65.1,548.4 66.5,544.5 68.1,540.7 69.7,536.9 71.4,533.1 73.2,529.3 75.1,525.6 77,521.9 78.9,518.2 80.9,514.5 82.8,510.8 84.7,507.1 86.6,503.5 88.5,499.8 90.4,496.1 92.3,492.5 94.2,488.8 96.1,485.2 97.9,481.5 99.8,477.9 101.7,474.3 103.6,470.6 105.5,467 107.4,463.3 109.3,459.7 111.3,456.1 113.2,452.5 115.2,448.9 117.3,445.3 119.3,441.7 121.4,438.1 123.5,434.5 125.6,431 127.7,427.4 129.8,423.9 132,420.3 134.1,416.8 136.2,413.2 138.3,409.7 140.4,406.1 142.5,402.6 144.7,399.1 146.8,395.6 149,392.1 151.2,388.6 153.4,385.1 155.6,381.6 157.8,378.1 160,374.7 162.3,371.2 164.6,367.8 166.9,364.3 169.2,360.9 171.6,357.5 173.9,354.1 176.3,350.7 178.7,347.3 181.1,343.9 183.6,340.6 186,337.2 188.5,333.9 190.9,330.6 193.4,327.2 195.9,324 198.5,320.7 201,317.4 203.5,314.2 206.1,310.9 208.7,307.7 211.3,304.6 214,301.4 216.6,298.3 219.3,295.2 222,292.1 224.8,289.1 227.5,286.1 230.3,283.1" fill="none" stroke="url(#gcy)" stroke-width="1.9"/>
<polyline points="209.8,274.8 212.9,271.9 215.9,269 219,266.1 222.1,263.2 225.3,260.3 228.4,257.5 231.6,254.7 234.8,251.9 237.9,249.1 241.1,246.3 244.3,243.5 247.5,240.7 250.6,237.8 253.8,235 257,232.2 260.1,229.4 263.3,226.5 266.4,223.7 269.6,220.9 272.8,218 276,215.2 279.2,212.5 282.4,209.7 285.7,207 289,204.4 292.4,201.8 295.8,199.3 299.3,196.9 302.8,194.5 306.3,192.1 309.8,189.8 313.4,187.5 317,185.2 320.6,182.9 324.2,180.7 327.8,178.5 331.4,176.3 335,174.1 338.7,171.9 342.3,169.7 346,167.6 349.6,165.4 353.3,163.3 357,161.2 360.7,159.1 364.4,157.1 368.1,155.1 371.8,153.1 375.6,151.1 379.4,149.1 383.1,147.2 386.9,145.3 390.7,143.4 394.5,141.5 398.4,139.7 402.2,137.9 406,136.1 409.9,134.3 413.7,132.4 417.6,130.6 421.4,128.8 425.2,127 429.1,125.3 433,123.6 436.9,121.9 440.8,120.3 444.8,118.8 448.8,117.4 452.9,116.1 456.9,114.8 460.9,113.5 465,112.3 469.1,111 473.1,109.7 477.1,108.3 481.1,106.9 485.2,105.5 489.2,104.1 493.2,102.7 497.3,101.4 501.3,100.1 505.4,98.8 509.5,97.6 513.5,96.4 517.6,95.2 521.7,94 525.8,92.8 529.9,91.7 534,90.6 538.1,89.6 542.3,88.6 546.4,87.7 550.6,86.8 554.7,85.9 558.9,85.1 563,84.3 567.2,83.6 571.4,82.8 575.6,82.1 579.7,81.3 583.9,80.5 588.1,79.8 592.3,79 596.4,78.2 600.6,77.4 604.8,76.6 609,75.9 613.2,75.1 617.3,74.4 621.5,73.7 625.7,73 629.9,72.4 634.1,71.8 638.4,71.2 642.6,70.7 646.8,70.1 651,69.6 655.2,69.1 659.4,68.6 663.6,68.1 667.9,67.7 672.1,67.2 676.3,66.8 680.5,66.4 684.7,66 688.9,65.7 693.2,65.3 697.4,65 701.6,64.7 705.8,64.4 710,64.2 714.2,64 718.4,63.8 722.6,63.6 726.8,63.4 730.9,63.3 735,63.2 739.1,63.1 743.2,63 747.3,63 751.4,62.9" fill="none" stroke="url(#gcy)" stroke-width="2.1"/>
<polyline points="212.8,276 215.8,273.1 218.8,270.1 221.9,267.2 224.9,264.4 228,261.5 231.2,258.7 234.3,255.9 237.4,253.1 240.6,250.3 243.7,247.5 246.9,244.7 250,241.8 253.2,239 256.3,236.2 259.4,233.4 262.6,230.6 265.7,227.7 268.9,224.9 272,222.1 275.2,219.3 278.3,216.5 281.5,213.7 284.7,210.9 288,208.3 291.3,205.6 294.7,203.1 298.1,200.6 301.5,198.1 305,195.7 308.5,193.4 312,191.1 315.6,188.8 319.2,186.5 322.7,184.3 326.3,182 329.9,179.8 333.5,177.6 337.1,175.4 340.7,173.2 344.3,171 347.9,168.9 351.5,166.7 355.2,164.6 358.9,162.5 362.5,160.4 366.2,158.4 369.9,156.4 373.6,154.4 377.4,152.4 381.1,150.4 384.9,148.5 388.7,146.6 392.5,144.7 396.3,142.9 400.1,141.1 403.9,139.2 407.7,137.4 411.5,135.6 415.3,133.8 419.2,132 423,130.2 426.8,128.4 430.7,126.6 434.5,124.9 438.4,123.3 442.3,121.7 446.3,120.2 450.3,118.8 454.3,117.5 458.3,116.2 462.3,114.9 466.4,113.6 470.4,112.4 474.4,111 478.5,109.7 482.5,108.3 486.5,106.9 490.5,105.5 494.6,104.1 498.6,102.8 502.7,101.5 506.7,100.3 510.8,99 514.9,97.8 518.9,96.6 523,95.5 527.1,94.3 531.2,93.2 535.3,92.1 539.4,91.1 543.5,90.1 547.6,89.1 551.7,88.2 555.9,87.4 560,86.6 564.2,85.8 568.3,85 572.5,84.2 576.6,83.5 580.8,82.7 585,81.9 589.1,81.2 593.3,80.4 597.4,79.6 601.6,78.8 605.8,78 609.9,77.3 614.1,76.5 618.3,75.8 622.4,75.1 626.6,74.4 630.8,73.8 635,73.2 639.2,72.6 643.4,72.1 647.6,71.6 651.8,71.1 656,70.5 660.2,70.1 664.4,69.6 668.6,69.1 672.8,68.7 677,68.3 681.2,67.9 685.4,67.5 689.6,67.1 693.8,66.8 697.9,66.5 702.1,66.2 706.3,65.9 710.5,65.7 714.7,65.5 718.8,65.3 723,65.1 727,64.9 731.1,64.8 735.1,64.7 739.1,64.6 743.1,64.5 747,64.5 751,64.4" fill="none" stroke="url(#gcy)" stroke-width="2.1"/>
<polyline points="215.7,277.2 218.7,274.2 221.7,271.3 224.7,268.4 227.7,265.6 230.8,262.7 233.9,259.9 237,257.1 240.1,254.2 243.2,251.4 246.3,248.6 249.5,245.8 252.6,243 255.7,240.2 258.8,237.4 261.9,234.6 265.1,231.8 268.2,228.9 271.3,226.1 274.4,223.3 277.6,220.5 280.7,217.7 283.9,214.9 287.1,212.2 290.3,209.5 293.6,206.9 296.9,204.3 300.3,201.8 303.7,199.4 307.2,197 310.7,194.7 314.2,192.3 317.8,190.1 321.3,187.8 324.9,185.6 328.4,183.3 332,181.1 335.6,178.9 339.2,176.7 342.7,174.5 346.3,172.3 349.9,170.2 353.5,168 357.1,165.9 360.7,163.8 364.4,161.8 368.1,159.7 371.7,157.7 375.5,155.7 379.2,153.7 382.9,151.8 386.6,149.8 390.4,147.9 394.2,146.1 398,144.2 401.7,142.4 405.5,140.6 409.3,138.8 413.1,137 416.9,135.2 420.7,133.3 424.6,131.5 428.4,129.8 432.2,128 436.1,126.3 439.9,124.7 443.8,123.1 447.8,121.6 451.7,120.2 455.7,118.8 459.7,117.5 463.7,116.3 467.8,115 471.8,113.7 475.8,112.4 479.8,111.1 483.8,109.7 487.9,108.3 491.9,106.9 495.9,105.5 499.9,104.2 504,102.9 508,101.7 512.1,100.5 516.2,99.3 520.2,98.1 524.3,96.9 528.4,95.8 532.4,94.7 536.5,93.6 540.6,92.5 544.7,91.5 548.8,90.6 552.9,89.7 557,88.8 561.2,88 565.3,87.2 569.4,86.4 573.6,85.6 577.7,84.9 581.8,84.1 586,83.3 590.1,82.6 594.3,81.8 598.4,81 602.6,80.2 606.7,79.4 610.9,78.7 615,77.9 619.2,77.2 623.4,76.5 627.5,75.8 631.7,75.2 635.9,74.6 640.1,74.1 644.3,73.5 648.4,73 652.6,72.5 656.8,72 661,71.5 665.2,71.1 669.3,70.6 673.5,70.2 677.7,69.8 681.9,69.4 686,69 690.2,68.6 694.4,68.3 698.5,68 702.7,67.7 706.8,67.4 710.9,67.2 715.1,67 719.2,66.8 723.3,66.6 727.3,66.4 731.2,66.3 735.2,66.2 739,66.1 742.9,66 746.7,66 750.6,65.9" fill="none" stroke="url(#gcy)" stroke-width="2.1"/>
<polyline points="218.6,278.4 221.6,275.4 224.5,272.5 227.5,269.6 230.5,266.7 233.6,263.9 236.6,261.1 239.7,258.2 242.8,255.4 245.8,252.6 248.9,249.8 252,247 255.1,244.2 258.2,241.4 261.3,238.6 264.4,235.8 267.5,233 270.6,230.1 273.7,227.3 276.8,224.5 280,221.7 283.1,218.9 286.2,216.2 289.4,213.4 292.6,210.7 295.9,208.1 299.2,205.6 302.6,203.1 306,200.7 309.4,198.3 312.9,195.9 316.4,193.6 319.9,191.4 323.5,189.1 327,186.9 330.6,184.6 334.1,182.4 337.7,180.2 341.2,178 344.8,175.8 348.3,173.7 351.9,171.5 355.4,169.3 359,167.2 362.6,165.1 366.3,163.1 369.9,161 373.6,159 377.3,157 381,155 384.7,153.1 388.4,151.2 392.1,149.3 395.9,147.4 399.7,145.6 403.4,143.7 407.2,141.9 411,140.1 414.8,138.3 418.6,136.5 422.3,134.7 426.1,132.9 429.9,131.1 433.8,129.4 437.6,127.7 441.5,126 445.3,124.5 449.3,123 453.2,121.6 457.2,120.2 461.1,118.9 465.1,117.6 469.1,116.4 473.1,115.1 477.2,113.8 481.2,112.4 485.2,111.1 489.2,109.7 493.2,108.3 497.2,107 501.3,105.7 505.3,104.4 509.4,103.1 513.4,101.9 517.5,100.7 521.5,99.6 525.6,98.4 529.7,97.2 533.7,96.1 537.8,95 541.9,94 545.9,93 550,92 554.1,91.1 558.2,90.3 562.3,89.4 566.4,88.6 570.5,87.8 574.6,87 578.8,86.3 582.9,85.5 587,84.7 591.1,83.9 595.3,83.2 599.4,82.4 603.5,81.6 607.7,80.8 611.8,80.1 616,79.3 620.1,78.6 624.3,77.9 628.4,77.3 632.6,76.7 636.8,76.1 640.9,75.5 645.1,75 649.3,74.5 653.4,74 657.6,73.5 661.8,73 665.9,72.5 670.1,72.1 674.2,71.6 678.4,71.2 682.5,70.8 686.7,70.5 690.8,70.1 695,69.8 699.1,69.5 703.2,69.2 707.3,68.9 711.4,68.7 715.5,68.5 719.6,68.3 723.6,68.1 727.6,67.9 731.4,67.8 735.2,67.7 739,67.6 742.7,67.5 746.5,67.5 750.2,67.4" fill="none" stroke="url(#gcy)" stroke-width="2.1"/>
<polyline points="221.5,279.5 224.5,276.6 227.4,273.7 230.4,270.8 233.3,267.9 236.3,265.1 239.4,262.2 242.4,259.4 245.4,256.6 248.5,253.8 251.6,251 254.6,248.2 257.7,245.4 260.8,242.6 263.8,239.8 266.9,237 270,234.2 273.1,231.3 276.2,228.5 279.3,225.7 282.4,222.9 285.5,220.1 288.6,217.4 291.7,214.7 294.9,212 298.2,209.4 301.5,206.8 304.8,204.4 308.2,201.9 311.6,199.5 315.1,197.2 318.6,194.9 322.1,192.6 325.6,190.4 329.2,188.2 332.7,186 336.2,183.8 339.8,181.6 343.3,179.4 346.8,177.2 350.3,175 353.8,172.8 357.4,170.6 360.9,168.5 364.5,166.4 368.1,164.4 371.8,162.3 375.4,160.3 379.1,158.3 382.8,156.4 386.4,154.4 390.2,152.5 393.9,150.6 397.6,148.8 401.4,146.9 405.1,145.1 408.9,143.3 412.6,141.5 416.4,139.7 420.2,137.9 423.9,136.1 427.7,134.3 431.5,132.5 435.3,130.8 439.1,129.1 443,127.4 446.8,125.8 450.7,124.3 454.7,122.9 458.6,121.6 462.5,120.3 466.5,119 470.5,117.7 474.5,116.4 478.5,115.1 482.5,113.8 486.5,112.4 490.5,111.1 494.6,109.7 498.6,108.4 502.6,107.1 506.7,105.8 510.7,104.6 514.7,103.4 518.8,102.2 522.8,101 526.9,99.9 530.9,98.7 535,97.6 539,96.5 543.1,95.5 547.2,94.4 551.2,93.5 555.3,92.6 559.4,91.7 563.5,90.8 567.5,90 571.6,89.2 575.7,88.4 579.8,87.7 583.9,86.9 588,86.1 592.2,85.3 596.3,84.5 600.4,83.8 604.5,83 608.6,82.2 612.8,81.5 616.9,80.7 621,80 625.2,79.3 629.3,78.7 633.5,78.1 637.6,77.5 641.8,77 645.9,76.4 650.1,75.9 654.3,75.4 658.4,74.9 662.5,74.5 666.7,74 670.8,73.5 675,73.1 679.1,72.7 683.2,72.3 687.3,72 691.4,71.6 695.6,71.3 699.6,71 703.7,70.7 707.8,70.4 711.9,70.2 716,70 720,69.8 724,69.6 727.8,69.4 731.6,69.3 735.3,69.2 738.9,69.1 742.6,69 746.2,69 749.8,68.9" fill="none" stroke="url(#gcy)" stroke-width="2.1"/>
<polyline points="224.5,280.7 227.4,277.8 230.3,274.9 233.2,272 236.1,269.1 239.1,266.2 242.1,263.4 245.1,260.6 248.1,257.8 251.1,255 254.2,252.2 257.2,249.4 260.2,246.6 263.3,243.8 266.4,241 269.4,238.2 272.5,235.4 275.5,232.6 278.6,229.7 281.7,226.9 284.7,224.2 287.8,221.4 290.9,218.6 294.1,215.9 297.3,213.2 300.5,210.6 303.8,208.1 307.1,205.6 310.5,203.2 313.9,200.8 317.3,198.5 320.8,196.2 324.3,193.9 327.8,191.7 331.3,189.5 334.8,187.3 338.4,185.1 341.9,182.9 345.4,180.7 348.8,178.5 352.3,176.3 355.8,174.1 359.3,172 362.8,169.8 366.4,167.7 370,165.7 373.6,163.6 377.2,161.6 380.9,159.6 384.5,157.7 388.2,155.7 391.9,153.8 395.6,151.9 399.3,150.1 403.1,148.3 406.8,146.4 410.5,144.6 414.3,142.8 418,141 421.8,139.2 425.5,137.4 429.3,135.6 433.1,133.9 436.9,132.1 440.7,130.4 444.5,128.8 448.3,127.2 452.2,125.7 456.1,124.3 460,122.9 464,121.6 467.9,120.3 471.9,119.1 475.9,117.8 479.9,116.5 483.9,115.2 487.9,113.8 491.9,112.5 495.9,111.1 499.9,109.8 503.9,108.5 508,107.3 512,106 516.1,104.8 520.1,103.7 524.2,102.5 528.2,101.3 532.2,100.2 536.3,99.1 540.3,98 544.3,96.9 548.4,95.9 552.4,94.9 556.5,94 560.5,93.1 564.6,92.3 568.7,91.5 572.7,90.6 576.8,89.8 580.9,89.1 585,88.3 589.1,87.5 593.2,86.7 597.3,85.9 601.4,85.2 605.5,84.4 609.6,83.6 613.7,82.9 617.8,82.1 621.9,81.4 626.1,80.7 630.2,80.1 634.4,79.5 638.5,78.9 642.6,78.4 646.8,77.9 650.9,77.4 655.1,76.9 659.2,76.4 663.3,75.9 667.5,75.5 671.6,75 675.7,74.6 679.8,74.2 683.9,73.8 688,73.5 692.1,73.1 696.2,72.8 700.2,72.5 704.3,72.2 708.3,71.9 712.4,71.7 716.4,71.5 720.4,71.3 724.3,71.1 728.1,70.9 731.8,70.8 735.4,70.7 738.9,70.6 742.4,70.5 745.9,70.5 749.3,70.4" fill="none" stroke="url(#gcy)" stroke-width="2.1"/>
<polyline points="227.4,281.9 230.3,279 233.1,276.1 236,273.2 238.9,270.3 241.9,267.4 244.8,264.6 247.8,261.8 250.8,259 253.8,256.2 256.8,253.4 259.8,250.6 262.8,247.8 265.8,245 268.9,242.2 271.9,239.4 274.9,236.6 278,233.8 281,231 284.1,228.2 287.1,225.4 290.2,222.6 293.3,219.9 296.4,217.1 299.6,214.5 302.8,211.9 306,209.3 309.4,206.9 312.7,204.5 316.1,202.1 319.5,199.8 323,197.5 326.4,195.2 329.9,193 333.5,190.8 337,188.6 340.5,186.4 344,184.2 347.4,182 350.9,179.8 354.3,177.6 357.8,175.4 361.3,173.3 364.8,171.1 368.3,169 371.9,167 375.4,164.9 379.1,162.9 382.7,160.9 386.3,159 390,157.1 393.7,155.2 397.4,153.3 401.1,151.4 404.8,149.6 408.5,147.8 412.2,146 415.9,144.2 419.7,142.4 423.4,140.6 427.1,138.8 430.9,137 434.6,135.2 438.4,133.5 442.2,131.8 446,130.2 449.8,128.6 453.7,127.1 457.6,125.7 461.5,124.3 465.4,123 469.3,121.7 473.3,120.4 477.2,119.1 481.2,117.9 485.2,116.5 489.2,115.2 493.2,113.8 497.2,112.5 501.3,111.2 505.3,109.9 509.3,108.7 513.4,107.5 517.4,106.3 521.4,105.1 525.5,103.9 529.5,102.8 533.5,101.7 537.5,100.5 541.6,99.4 545.6,98.4 549.6,97.4 553.6,96.4 557.7,95.5 561.7,94.6 565.8,93.7 569.8,92.9 573.8,92.1 577.9,91.2 582,90.5 586,89.7 590.1,88.9 594.2,88.1 598.3,87.3 602.4,86.5 606.4,85.8 610.5,85 614.6,84.3 618.8,83.5 622.9,82.8 627,82.2 631.1,81.5 635.2,80.9 639.4,80.4 643.5,79.8 647.6,79.3 651.8,78.8 655.9,78.3 660,77.8 664.1,77.4 668.2,76.9 672.3,76.5 676.4,76.1 680.5,75.7 684.6,75.3 688.6,74.9 692.7,74.6 696.8,74.3 700.8,74 704.8,73.7 708.8,73.4 712.8,73.2 716.8,73 720.8,72.8 724.6,72.6 728.3,72.4 731.9,72.3 735.4,72.2 738.9,72.1 742.2,72 745.6,72 748.9,71.9" fill="none" stroke="url(#gcy)" stroke-width="2.1"/>
<polyline points="230.3,283.1 233.1,280.2 236,277.2 238.8,274.3 241.7,271.5 244.6,268.6 247.5,265.8 250.5,262.9 253.4,260.1 256.4,257.3 259.4,254.5 262.4,251.7 265.4,248.9 268.4,246.1 271.4,243.4 274.4,240.6 277.4,237.8 280.4,235 283.5,232.2 286.5,229.4 289.5,226.6 292.6,223.8 295.7,221.1 298.8,218.4 301.9,215.7 305.1,213.1 308.3,210.6 311.6,208.1 314.9,205.7 318.3,203.4 321.7,201 325.2,198.8 328.6,196.5 332.1,194.3 335.6,192.1 339.1,189.9 342.6,187.7 346,185.5 349.5,183.3 352.9,181.1 356.3,178.9 359.8,176.7 363.2,174.6 366.7,172.4 370.2,170.3 373.7,168.3 377.3,166.2 380.9,164.2 384.5,162.3 388.1,160.3 391.8,158.4 395.4,156.5 399.1,154.6 402.8,152.8 406.5,150.9 410.2,149.1 413.9,147.3 417.6,145.5 421.3,143.7 425,141.9 428.7,140.2 432.5,138.4 436.2,136.6 440,134.9 443.7,133.2 447.5,131.5 451.3,130 455.2,128.5 459,127 462.9,125.7 466.8,124.3 470.7,123.1 474.6,121.8 478.6,120.5 482.6,119.2 486.6,117.9 490.6,116.6 494.6,115.2 498.6,113.9 502.6,112.6 506.6,111.4 510.7,110.1 514.7,108.9 518.7,107.7 522.7,106.6 526.8,105.4 530.8,104.3 534.8,103.1 538.8,102 542.8,100.9 546.8,99.8 550.8,98.8 554.8,97.8 558.9,96.9 562.9,96 566.9,95.1 570.9,94.3 575,93.5 579,92.7 583,91.8 587.1,91.1 591.1,90.3 595.2,89.5 599.3,88.7 603.3,87.9 607.4,87.2 611.5,86.4 615.6,85.7 619.7,84.9 623.8,84.2 627.9,83.6 632,83 636.1,82.4 640.2,81.8 644.4,81.3 648.5,80.8 652.6,80.3 656.7,79.8 660.8,79.3 664.9,78.8 669,78.4 673.1,78 677.1,77.6 681.2,77.2 685.3,76.8 689.3,76.4 693.3,76.1 697.4,75.8 701.4,75.5 705.4,75.2 709.3,74.9 713.3,74.7 717.3,74.5 721.2,74.3 725,74.1 728.6,73.9 732.1,73.8 735.5,73.7 738.8,73.6 742.1,73.5 745.3,73.5 748.5,73.4" fill="none" stroke="url(#gcy)" stroke-width="2.1"/>
<polyline points="109.6,559.1 110,558.2 110.6,555.8 111.8,552.1 113.1,548.3 114.6,544.6 116.2,540.9 118,537.3 119.8,533.7 121.7,530.1 123.7,526.5 125.6,523 127.5,519.4 129.3,515.8 131.1,512.3 132.8,508.7 134.4,505.1 136.1,501.5 137.7,497.9 139.2,494.4 140.8,490.8 142.4,487.2 143.9,483.6 145.5,480 147.1,476.4 148.7,472.8 150.3,469.3 152,465.7 153.7,462.1 155.5,458.6 157.3,455.1 159.2,451.6 161.1,448.1 163.1,444.6 165,441.1 166.9,437.6 168.8,434.1 170.7,430.6 172.6,427.1 174.5,423.6 176.4,420.1 178.2,416.6 180.1,413.1 182,409.6 183.8,406.2 185.7,402.7 187.6,399.2 189.5,395.7 191.5,392.3 193.4,388.8 195.4,385.4 197.4,382 199.5,378.6 201.6,375.2 203.7,371.8 205.8,368.4 208,365.1 210.2,361.8 212.4,358.4 214.7,355.1 217,351.8 219.3,348.5 221.6,345.2 223.9,342 226.2,338.7 228.5,335.5 230.9,332.2 233.2,329 235.5,325.8 237.9,322.6 240.2,319.5 242.6,316.3 245,313.2 247.4,310.1 249.8,307 252.2,303.9 254.7,300.9 257.1,297.9 259.6,294.9" fill="none" stroke="url(#gcy)" stroke-width="1.9"/>
<polyline points="113.8,559.5 114,558.8 114.7,556.5 115.8,552.7 117.1,549 118.5,545.3 120.2,541.6 121.9,538 123.8,534.4 125.7,530.8 127.6,527.3 129.5,523.7 131.4,520.2 133.2,516.6 135,513 136.7,509.5 138.3,505.9 139.9,502.3 141.5,498.7 143.1,495.2 144.6,491.6 146.1,488 147.7,484.4 149.2,480.8 150.8,477.2 152.4,473.7 154,470.1 155.6,466.5 157.3,463 159.1,459.5 160.9,455.9 162.7,452.4 164.6,448.9 166.6,445.5 168.5,442 170.4,438.5 172.3,435 174.2,431.5 176,428 177.9,424.5 179.7,421 181.6,417.5 183.4,414 185.2,410.6 187.1,407.1 189,403.6 190.8,400.1 192.7,396.7 194.6,393.2 196.6,389.8 198.5,386.4 200.5,382.9 202.5,379.5 204.6,376.1 206.7,372.8 208.8,369.4 211,366.1 213.2,362.7 215.4,359.4 217.7,356.1 219.9,352.8 222.2,349.5 224.5,346.2 226.8,343 229.1,339.7 231.4,336.5 233.7,333.3 236,330 238.4,326.8 240.7,323.7 243,320.5 245.4,317.3 247.7,314.2 250.1,311.1 252.5,308 254.9,305 257.3,302 259.7,299 262.2,296" fill="none" stroke="url(#gcy)" stroke-width="1.9"/>
<polyline points="117.9,559.9 118.1,559.4 118.7,557.2 119.8,553.4 121,549.7 122.5,546 124.1,542.3 125.9,538.7 127.7,535.1 129.6,531.6 131.6,528 133.5,524.5 135.4,520.9 137.2,517.4 138.9,513.8 140.6,510.3 142.2,506.7 143.8,503.1 145.3,499.5 146.9,496 148.4,492.4 149.9,488.8 151.4,485.2 152.9,481.7 154.4,478.1 156,474.5 157.6,470.9 159.2,467.4 160.9,463.8 162.6,460.3 164.4,456.8 166.3,453.3 168.1,449.8 170,446.3 172,442.9 173.9,439.4 175.7,435.9 177.6,432.4 179.4,428.9 181.3,425.4 183.1,421.9 184.9,418.5 186.7,415 188.5,411.5 190.4,408 192.2,404.5 194,401.1 195.9,397.6 197.8,394.2 199.7,390.7 201.7,387.3 203.6,383.9 205.6,380.5 207.7,377.1 209.8,373.7 211.9,370.4 214,367 216.2,363.7 218.4,360.4 220.6,357.1 222.9,353.8 225.1,350.5 227.4,347.2 229.7,344 232,340.7 234.3,337.5 236.6,334.3 238.9,331.1 241.2,327.9 243.5,324.7 245.8,321.5 248.1,318.4 250.5,315.3 252.8,312.2 255.2,309.1 257.6,306 259.9,303 262.3,300 264.8,297" fill="none" stroke="url(#gcy)" stroke-width="1.9"/>
<polyline points="122,560.4 122.2,560 122.7,557.8 123.7,554.1 125,550.3 126.5,546.7 128.1,543 129.8,539.4 131.7,535.8 133.6,532.3 135.5,528.7 137.4,525.2 139.3,521.7 141.1,518.1 142.8,514.6 144.5,511 146.1,507.5 147.6,503.9 149.2,500.3 150.7,496.8 152.2,493.2 153.6,489.6 155.1,486.1 156.6,482.5 158.1,478.9 159.6,475.3 161.2,471.8 162.8,468.2 164.5,464.7 166.2,461.2 167.9,457.7 169.8,454.2 171.6,450.7 173.5,447.2 175.4,443.8 177.3,440.3 179.2,436.8 181,433.3 182.8,429.8 184.6,426.4 186.4,422.9 188.2,419.4 190,415.9 191.8,412.4 193.6,409 195.4,405.5 197.3,402 199.1,398.6 201,395.1 202.9,391.7 204.8,388.3 206.7,384.8 208.7,381.4 210.7,378.1 212.8,374.7 214.9,371.3 217,368 219.2,364.7 221.4,361.4 223.6,358.1 225.8,354.8 228.1,351.5 230.3,348.2 232.6,345 234.9,341.7 237.2,338.5 239.4,335.3 241.7,332.1 244,328.9 246.3,325.7 248.6,322.6 250.9,319.4 253.2,316.3 255.5,313.2 257.9,310.1 260.2,307.1 262.6,304 264.9,301 267.3,298.1" fill="none" stroke="url(#gcy)" stroke-width="1.9"/>
<polyline points="126.1,560.8 126.2,560.6 126.7,558.5 127.7,554.7 129,551 130.4,547.3 132,543.7 133.8,540.1 135.6,536.5 137.5,533 139.5,529.5 141.4,526 143.2,522.4 145,518.9 146.7,515.4 148.4,511.8 150,508.3 151.5,504.7 153,501.2 154.5,497.6 156,494 157.4,490.5 158.9,486.9 160.3,483.3 161.8,479.7 163.3,476.2 164.8,472.6 166.4,469.1 168,465.6 169.7,462 171.5,458.5 173.3,455 175.2,451.6 177,448.1 178.9,444.6 180.8,441.2 182.6,437.7 184.4,434.2 186.2,430.8 188,427.3 189.8,423.8 191.6,420.3 193.3,416.8 195.1,413.4 196.9,409.9 198.7,406.4 200.5,403 202.3,399.5 204.1,396.1 206,392.6 207.9,389.2 209.8,385.8 211.8,382.4 213.8,379 215.8,375.7 217.9,372.3 220,369 222.2,365.7 224.4,362.3 226.6,359.1 228.8,355.8 231,352.5 233.2,349.2 235.5,346 237.8,342.8 240,339.5 242.3,336.3 244.6,333.1 246.8,329.9 249.1,326.8 251.4,323.6 253.7,320.5 256,317.3 258.3,314.2 260.6,311.2 262.9,308.1 265.2,305.1 267.6,302.1 269.9,299.1" fill="none" stroke="url(#gcy)" stroke-width="1.9"/>
<polyline points="259.6,294.9 262.1,292 264.6,289 267.1,286.1 269.6,283.3 272.2,280.4 274.8,277.5 277.4,274.7 280.1,271.9 282.7,269.1 285.4,266.3 288.1,263.5 290.9,260.8 293.7,258 296.5,255.2 299.3,252.5 302.1,249.8 304.9,247 307.8,244.3 310.6,241.5 313.5,238.8 316.3,236.1 319.2,233.4 322.1,230.8 325,228.1 328,225.6 331.1,223.1 334.2,220.7 337.3,218.3 340.5,216 343.7,213.8 347,211.6 350.3,209.4 353.6,207.3 357,205.1 360.3,203 363.6,200.9 366.9,198.7 370.1,196.5 373.2,194.3 376.3,192.1 379.4,189.8 382.6,187.6 385.8,185.5 389.1,183.4 392.4,181.3 395.7,179.3 399.1,177.3 402.5,175.4 406,173.5 409.5,171.6 413,169.8 416.4,167.9 420,166.1 423.5,164.3 427,162.6 430.5,160.8 434,159 437.6,157.3 441.1,155.5 444.7,153.7 448.3,152 451.8,150.3" fill="none" stroke="url(#gcy)" stroke-width="2"/>
<polyline points="262.2,296 264.6,293 267.1,290.1 269.6,287.2 272.1,284.3 274.7,281.4 277.2,278.6 279.8,275.8 282.4,272.9 285.1,270.1 287.7,267.3 290.4,264.6 293.1,261.8 295.9,259 298.7,256.3 301.5,253.5 304.3,250.8 307.1,248.1 309.9,245.3 312.7,242.6 315.6,239.9 318.4,237.2 321.3,234.5 324.2,231.8 327.1,229.2 330.1,226.7 333.1,224.2 336.2,221.8 339.3,219.5 342.4,217.2 345.7,214.9 348.9,212.7 352.2,210.5 355.6,208.4 358.9,206.3 362.2,204.2 365.5,202 368.8,199.9 371.9,197.7 375,195.5 378.1,193.2 381.2,191 384.3,188.8 387.5,186.6 390.7,184.5 394,182.5 397.3,180.5 400.7,178.5 404.1,176.6 407.6,174.7 411,172.8 414.5,170.9 418,169.1 421.5,167.3 425,165.5 428.5,163.7 432,162 435.5,160.2 439,158.5 442.5,156.7 446.1,154.9 449.6,153.2 453.2,151.5" fill="none" stroke="url(#gcy)" stroke-width="2"/>
<polyline points="264.8,297 267.2,294.1 269.6,291.1 272.1,288.2 274.6,285.3 277.1,282.5 279.6,279.6 282.2,276.8 284.8,274 287.4,271.2 290,268.4 292.7,265.6 295.4,262.8 298.1,260.1 300.9,257.3 303.7,254.6 306.5,251.9 309.3,249.1 312.1,246.4 314.9,243.7 317.7,241 320.5,238.3 323.3,235.6 326.2,232.9 329.1,230.3 332.1,227.8 335.1,225.3 338.1,222.9 341.3,220.6 344.4,218.3 347.6,216 350.8,213.8 354.1,211.7 357.5,209.5 360.8,207.4 364.1,205.3 367.4,203.2 370.6,201 373.7,198.9 376.8,196.6 379.9,194.4 382.9,192.1 386,189.9 389.2,187.8 392.4,185.7 395.7,183.6 399,181.6 402.3,179.6 405.7,177.7 409.1,175.8 412.6,174 416,172.1 419.5,170.3 423,168.5 426.5,166.7 430,164.9 433.4,163.2 436.9,161.4 440.5,159.6 444,157.9 447.5,156.1 451,154.4 454.6,152.7" fill="none" stroke="url(#gcy)" stroke-width="2"/>
<polyline points="267.3,298.1 269.7,295.1 272.1,292.2 274.6,289.3 277,286.4 279.5,283.5 282,280.7 284.6,277.8 287.1,275 289.7,272.2 292.3,269.4 295,266.7 297.6,263.9 300.4,261.1 303.1,258.4 305.9,255.7 308.6,252.9 311.4,250.2 314.2,247.5 317,244.8 319.8,242 322.6,239.3 325.4,236.7 328.3,234 331.2,231.4 334.1,228.9 337.1,226.4 340.1,224 343.2,221.7 346.4,219.4 349.5,217.2 352.8,215 356.1,212.8 359.4,210.7 362.7,208.6 366,206.5 369.2,204.4 372.4,202.2 375.6,200 378.6,197.8 381.6,195.5 384.7,193.3 387.7,191.1 390.9,188.9 394,186.8 397.3,184.8 400.6,182.8 403.9,180.8 407.3,178.9 410.7,177 414.2,175.1 417.6,173.3 421,171.5 424.5,169.7 428,167.9 431.4,166.1 434.9,164.3 438.4,162.6 441.9,160.8 445.4,159.1 448.9,157.3 452.4,155.6 456,153.9" fill="none" stroke="url(#gcy)" stroke-width="2"/>
<polyline points="269.9,299.1 272.3,296.2 274.7,293.2 277.1,290.3 279.5,287.4 282,284.5 284.4,281.7 286.9,278.9 289.5,276.1 292,273.3 294.6,270.5 297.2,267.7 299.9,264.9 302.6,262.2 305.3,259.4 308.1,256.7 310.8,254 313.6,251.3 316.4,248.5 319.1,245.8 321.9,243.1 324.7,240.4 327.5,237.8 330.3,235.1 333.2,232.5 336.1,230 339.1,227.5 342.1,225.1 345.2,222.8 348.3,220.5 351.5,218.3 354.7,216.1 358,214 361.3,211.8 364.6,209.7 367.8,207.6 371.1,205.5 374.3,203.4 377.4,201.2 380.4,198.9 383.4,196.7 386.4,194.4 389.4,192.2 392.5,190.1 395.7,188 398.9,185.9 402.2,183.9 405.5,182 408.9,180 412.3,178.1 415.7,176.3 419.1,174.4 422.6,172.6 426,170.8 429.5,169.1 432.9,167.3 436.4,165.5 439.9,163.8 443.3,162 446.8,160.3 450.3,158.5 453.8,156.8 457.4,155.1" fill="none" stroke="url(#gcy)" stroke-width="2"/>
<polyline points="454.4,147.6 458,145.9 461.6,144.3 465.2,142.7 468.9,141.2 472.5,139.8 476.2,138.3 479.9,137 483.7,135.7 487.4,134.4 491.3,133.1 495.1,131.8 499.1,130.6 503,129.4 507,128.1 511,126.9 515,125.8 519,124.6 523,123.5 527,122.4 531,121.2 535,120.1 538.9,119 542.8,117.9 546.7,116.8 550.6,115.6 554.5,114.5 558.4,113.5 562.2,112.4 566.1,111.4 569.9,110.3 573.7,109.4 577.5,108.4 581.4,107.5 585.2,106.6 589.1,105.7 592.9,104.8 596.8,104 600.7,103.2 604.6,102.3 608.5,101.6 612.5,100.8 616.4,100.1 620.4,99.3 624.4,98.6 628.4,98 632.3,97.4 636.3,96.8 640.3,96.2 644.3,95.6 648.3,95.1 652.3,94.6 656.3,94.2 660.3,93.7 664.2,93.3 668.2,92.8 672.1,92.4 676.1,92 680,91.7 683.9,91.3 687.7,90.9 691.6,90.6 695.4,90.3 699.2,90 702.9,89.7 706.7,89.4 710.4,89.1 714,88.9 717.7,88.6 721.3,88.4 724.9,88.2 728.1,88 731.1,87.9 733.7,87.8 736.1,87.7 738.4,87.6 740.5,87.5 742.6,87.4 744.7,87.4" fill="none" stroke="#00b4b4" stroke-width="1.6"/>
<polyline points="456.1,149.1 459.7,147.5 463.3,145.8 466.9,144.3 470.5,142.7 474.1,141.3 477.8,139.9 481.5,138.5 485.2,137.2 489,135.9 492.8,134.6 496.6,133.3 500.5,132.1 504.5,130.9 508.5,129.7 512.5,128.5 516.5,127.3 520.5,126.2 524.5,125.1 528.5,124 532.5,122.8 536.4,121.7 540.3,120.6 544.2,119.5 548.1,118.4 552,117.3 555.9,116.2 559.7,115.1 563.6,114 567.4,113 571.2,111.9 575,110.9 578.8,110 582.6,109 586.4,108.1 590.3,107.2 594.1,106.4 598,105.5 601.8,104.7 605.7,103.9 609.6,103.1 613.6,102.3 617.5,101.6 621.4,100.9 625.4,100.2 629.4,99.5 633.4,98.9 637.3,98.3 641.3,97.8 645.3,97.2 649.3,96.7 653.3,96.2 657.2,95.8 661.2,95.3 665.1,94.9 669.1,94.5 673,94 676.9,93.7 680.8,93.3 684.7,92.9 688.5,92.6 692.3,92.2 696.1,91.9 699.9,91.6 703.6,91.3 707.3,91 711,90.8 714.6,90.5 718.2,90.3 721.8,90.1 725.3,89.9 728.5,89.7 731.3,89.5 733.9,89.4 736.2,89.3 738.3,89.2 740.3,89.2 742.3,89.1 744.2,89" fill="none" stroke="#00b4b4" stroke-width="1.6"/>
<polyline points="457.8,150.6 461.4,149 464.9,147.4 468.5,145.8 472.1,144.2 475.8,142.8 479.4,141.4 483,140 486.7,138.6 490.5,137.4 494.3,136.1 498.1,134.8 502,133.6 506,132.4 510,131.2 514,130 518,128.9 522,127.8 526,126.6 530,125.5 533.9,124.4 537.8,123.3 541.8,122.2 545.7,121.1 549.5,120 553.4,118.9 557.3,117.8 561.1,116.7 564.9,115.6 568.7,114.6 572.5,113.5 576.3,112.5 580.1,111.6 583.8,110.6 587.6,109.7 591.4,108.8 595.3,107.9 599.1,107 603,106.2 606.8,105.4 610.7,104.6 614.6,103.8 618.6,103.1 622.5,102.4 626.4,101.7 630.4,101.1 634.4,100.5 638.3,99.9 642.3,99.3 646.3,98.8 650.3,98.3 654.2,97.8 658.2,97.3 662.1,96.9 666,96.5 670,96.1 673.9,95.7 677.7,95.3 681.6,94.9 685.5,94.5 689.3,94.2 693.1,93.9 696.8,93.5 700.5,93.2 704.2,93 707.9,92.7 711.5,92.4 715.1,92.2 718.7,91.9 722.2,91.7 725.7,91.5 728.9,91.3 731.6,91.2 734.1,91.1 736.3,91 738.3,90.9 740.2,90.8 742,90.7 743.8,90.7" fill="none" stroke="#00b4b4" stroke-width="1.6"/>
<polyline points="459.5,152.1 463,150.5 466.6,148.9 470.2,147.3 473.8,145.8 477.4,144.3 481,142.9 484.6,141.5 488.3,140.1 492,138.8 495.8,137.6 499.6,136.3 503.5,135.1 507.5,133.9 511.4,132.7 515.5,131.6 519.5,130.4 523.5,129.3 527.4,128.2 531.4,127.1 535.4,126 539.3,125 543.2,123.8 547.1,122.7 551,121.6 554.8,120.5 558.6,119.4 562.5,118.3 566.3,117.2 570,116.2 573.8,115.1 577.6,114.1 581.3,113.1 585.1,112.2 588.9,111.2 592.6,110.3 596.4,109.4 600.3,108.6 604.1,107.7 608,106.9 611.8,106.1 615.7,105.4 619.6,104.6 623.6,103.9 627.5,103.3 631.4,102.6 635.4,102 639.3,101.4 643.3,100.9 647.3,100.4 651.2,99.9 655.2,99.4 659.1,98.9 663,98.5 666.9,98.1 670.8,97.7 674.7,97.3 678.6,96.9 682.4,96.5 686.2,96.2 690,95.8 693.8,95.5 697.5,95.2 701.2,94.9 704.9,94.6 708.5,94.3 712.1,94.1 715.7,93.8 719.2,93.6 722.7,93.4 726.2,93.2 729.3,93 731.9,92.9 734.3,92.7 736.3,92.6 738.2,92.5 740,92.5 741.7,92.4 743.3,92.3" fill="none" stroke="#00b4b4" stroke-width="1.6"/>
<polygon points="65.1,554.4 66.4,551 68.2,545.8 70.3,540.5 72.6,535.3 75.1,530.1 77.6,525 80.3,519.9 82.9,514.8 85.6,509.8 88.2,504.7 90.8,499.7 93.4,494.6 96,489.6 98.5,484.6 101.1,479.6 103.7,474.5 106.3,469.5 108.9,464.5 111.5,459.5 114.2,454.6 116.9,449.6 119.7,444.6 122.6,439.7 125.4,434.8 128.3,429.9 131.2,425 134.1,420.1 137,415.2 139.9,410.3 142.8,405.5 145.7,400.6 148.7,395.8 151.6,391 154.6,386.2 157.7,381.4 160.7,376.6 163.8,371.8 166.9,367.1 170.1,362.4 173.3,357.7 176.6,353 179.9,348.3 183.2,343.7 186.5,339.1 189.9,334.5 193.3,329.9 196.8,325.3 200.2,320.8 203.7,316.3 207.2,311.9 210.8,307.5 214.4,303.1 218,298.8 221.7,294.6 225.5,290.4 229.2,286.2 233.1,282.1 237,278.1 240.9,274.1 244.8,270.2 248.8,266.2 252.9,262.4 256.9,258.5 261,254.6 265.1,250.8 269.2,247 273.4,243.1 277.5,239.3 281.7,235.4 285.8,231.6 290,227.7 294.2,223.9 298.4,220.2 302.7,216.5 307.1,212.9 311.6,209.5 316.1,206.1 320.7,202.9 325.4,199.7 330.1,196.6 334.9,193.5 339.7,190.5 344.4,187.5 349.2,184.4 353.8,181.4 358.5,178.3 363.2,175.3 367.9,172.4 372.7,169.5 377.6,166.6 382.5,163.9 387.5,161.1 392.4,158.5 397.5,155.8 402.5,153.3 407.5,150.7 412.6,148.2 417.7,145.7 422.8,143.2 427.9,140.7 433,138.3 438.1,135.8 443.3,133.4 448.5,131.2 453.7,129 459,127 464.3,125.1 469.7,123.3 475.1,121.5 480.5,119.7 485.9,117.9 491.4,116 496.9,114.2 502.4,112.4 508,110.6 513.5,108.9 519,107.2 524.5,105.6 530.1,104 535.6,102.4 541.1,100.8 546.6,99.3 552.1,97.9 557.6,96.6 563.1,95.3 568.6,94.1 574.2,92.9 579.7,91.8 585.3,90.7 590.9,89.6 596.5,88.5 602.1,87.4 607.7,86.3 613.3,85.2 618.9,84.2 624.6,83.2 630.2,82.3 635.9,81.4 641.5,80.6 647.2,79.8 652.8,79.1 658.5,78.4 664.1,77.7 669.7,77 675.4,76.4 681,75.8 686.6,75.3 692.1,74.7 697.7,74.2 703.2,73.8 708.7,73.4 714.2,73 719.7,72.7 725,72.4 730.1,72.1 735,71.9 739.7,71.8 744.4,71.6 749,71.5 744.4,88.3 741.7,88.4 738.9,88.5 735.9,88.7 732.5,88.9 728.7,89.1 724.2,89.4 719.3,89.7 714.4,90 709.3,90.4 704.2,90.8 699.1,91.2 693.9,91.7 688.7,92.2 683.4,92.7 678.1,93.2 672.7,93.8 667.3,94.4 661.9,95 656.5,95.7 651,96.4 645.6,97.1 640.1,97.9 634.6,98.7 629.1,99.5 623.7,100.4 618.2,101.4 612.8,102.4 607.4,103.5 602,104.6 596.7,105.7 591.4,106.9 586.1,108.2 580.8,109.4 575.6,110.7 570.4,112.1 565.1,113.5 559.8,115 554.5,116.5 549.2,118 543.8,119.6 538.4,121.1 533,122.6 527.5,124.2 522.1,125.7 516.5,127.3 511,128.9 505.5,130.5 500.1,132.2 494.7,133.9 489.4,135.6 484.2,137.4 479.1,139.3 474.1,141.2 469.1,143.3 464.1,145.4 459.1,147.6 454.1,149.9 449.1,152.2 444.2,154.6 439.3,157 434.4,159.4 429.5,161.8 424.6,164.2 419.8,166.7 414.9,169.1 410.1,171.7 405.3,174.2 400.5,176.9 395.8,179.5 391.2,182.3 386.6,185.2 382.2,188.1 377.9,191.1 373.6,194.2 369.2,197.2 364.7,200.2 360.1,203.1 355.5,206 350.9,208.9 346.3,211.9 341.7,215 337.3,218.1 332.9,221.3 328.7,224.7 324.5,228.2 320.4,231.8 316.4,235.4 312.4,239.1 308.4,242.9 304.5,246.6 300.5,250.4 296.6,254.1 292.7,257.9 288.8,261.7 285,265.5 281.2,269.3 277.5,273.2 273.8,277 270.2,280.9 266.6,284.9 263.1,288.9 259.5,292.9 256.1,297 252.6,301.1 249.2,305.2 245.8,309.5 242.4,313.7 239.1,318 235.8,322.4 232.5,326.8 229.3,331.2 226.1,335.7 222.9,340.2 219.7,344.7 216.5,349.2 213.3,353.7 210.2,358.3 207.1,362.9 204.1,367.5 201.1,372.2 198.2,376.8 195.4,381.5 192.6,386.2 189.9,391 187.2,395.7 184.5,400.5 181.9,405.3 179.3,410.1 176.7,414.9 174.1,419.7 171.5,424.5 168.9,429.4 166.3,434.2 163.7,439 161,443.8 158.3,448.6 155.7,453.5 153.1,458.3 150.7,463.2 148.3,468.1 146.1,473.1 143.8,478 141.6,482.9 139.5,487.9 137.3,492.8 135.1,497.8 132.9,502.7 130.6,507.6 128.2,512.6 125.7,517.5 123.1,522.4 120.5,527.3 117.8,532.3 115.3,537.3 112.9,542.3 110.8,547.4 109,552.6 107.5,557.5 107,558.8" fill="url(#gbl)"/>
<polygon points="72.9,555.2 74.1,552.2 75.9,546.9 77.9,541.6 80.2,536.4 82.7,531.2 85.3,526 88,520.9 90.7,515.8 93.3,510.7 96,505.6 98.5,500.5 101.1,495.4 103.6,490.3 106.2,485.3 108.7,480.2 111.2,475.2 113.8,470.1 116.3,465.1 118.9,460 121.6,455 124.3,450 127.1,445 130,440 132.9,435.1 135.7,430.1 138.6,425.2 141.5,420.3 144.4,415.3 147.2,410.4 150.1,405.5 153,400.6 156,395.7 158.9,390.9 161.9,386 164.9,381.2 167.9,376.4 171,371.6 174.2,366.8 177.4,362 180.6,357.3 183.9,352.6 187.2,347.9 190.5,343.2 193.9,338.6 197.2,333.9 200.7,329.3 204.1,324.8 207.6,320.2 211.1,315.7 214.6,311.2 218.2,306.8 221.8,302.4 225.4,298.1 229.1,293.8 232.9,289.6 236.7,285.5 240.5,281.4 244.4,277.3 248.3,273.3 252.3,269.3 256.3,265.4 260.3,261.5 264.3,257.6 268.4,253.7 272.5,249.8 276.7,245.9 280.8,242 285,238.2 289.1,234.3 293.3,230.4 297.5,226.6 301.7,222.8 306,219.1 310.4,215.4 314.9,212 319.4,208.6 324,205.3 328.7,202.1 333.5,199 349.8,208.7 345.1,211.7 340.6,214.8 336.1,218 331.7,221.3 327.3,224.7 323.1,228.2 319,231.9 314.9,235.6 310.9,239.4 306.9,243.1 302.9,246.9 298.8,250.7 294.9,254.6 290.9,258.4 287,262.2 283.1,266.1 279.3,269.9 275.5,273.8 271.8,277.8 268.1,281.7 264.5,285.7 260.9,289.8 257.4,293.8 253.8,298 250.3,302.2 246.9,306.4 243.4,310.7 240,315 236.6,319.4 233.3,323.8 230,328.3 226.8,332.8 223.5,337.3 220.2,341.9 217,346.4 213.8,351 210.6,355.6 207.5,360.3 204.4,364.9 201.3,369.6 198.3,374.3 195.4,379.1 192.6,383.8 189.8,388.6 187,393.4 184.3,398.3 181.6,403.1 179,408 176.3,412.8 173.7,417.7 171.1,422.6 168.4,427.5 165.8,432.3 163.1,437.2 160.4,442.1 157.6,447 155,451.9 152.4,456.8 149.8,461.7 147.4,466.7 145.1,471.7 142.8,476.7 140.6,481.7 138.4,486.7 136.2,491.7 133.9,496.7 131.6,501.7 129.3,506.7 126.9,511.7 124.4,516.7 121.8,521.7 119.1,526.6 116.5,531.7 113.9,536.7 111.5,541.8 109.3,547 107.4,552.2 106,557.3 105.4,558.6" fill="#000094"/>
<polyline points="77.8,555.7 78.5,553.7 79.6,550.8 80.9,546.9 82.4,543.1 83.9,539.3 85.6,535.6 87.4,531.9 89.3,528.2 91.2,524.5 93.1,520.8 95,517.2 97,513.5 98.9,509.9 100.7,506.3 102.6,502.6 104.4,499 106.2,495.4 108,491.7 109.8,488.1 111.5,484.5 113.3,480.8 115.1,477.2 116.9,473.6 118.7,470 120.5,466.4 122.3,462.7 124.2,459.1 126.1,455.5 128,452 130,448.4 132,444.8 134,441.3 136.1,437.7 138.1,434.2 140.2,430.6 142.2,427.1 144.3,423.6 146.3,420 148.3,416.5 150.4,413 152.4,409.5 154.5,405.9 156.5,402.4 158.6,398.9 160.6,395.4 162.7,391.9 164.8,388.5 167,385 169.1,381.5 171.3,378.1 173.4,374.6 175.7,371.2 177.9,367.8 180.1,364.4 182.4,361 184.7,357.6 187.1,354.2 189.4,350.8 191.8,347.5 194.2,344.1 196.6,340.8 199,337.5 201.4,334.2 203.8,330.9 206.3,327.6 208.7,324.3 211.2,321.1 213.7,317.9 216.2,314.6 218.7,311.5 221.3,308.3 223.8,305.1 226.4,302 229,298.9 231.6,295.9 234.3,292.8 236.9,289.8 239.6,286.9 242.3,283.9 245.1,281 247.8,278.1 250.6,275.2 253.4,272.3 256.2,269.5 259,266.7 261.9,263.9 264.8,261.1 267.6,258.3 270.5,255.5 273.5,252.7 276.4,249.9 279.3,247.1 282.3,244.3 285.2,241.6 288.2,238.8 291.2,236 294.2,233.2 297.1,230.5 300.1,227.7 303.1,225 306.2,222.3 309.2,219.7 312.4,217.1" fill="none" stroke="#00c8c8" stroke-width="1.1" stroke-dasharray="1.5 1.5"/>
<polyline points="83.4,556.3 84.1,554.5 85.1,551.7 86.4,547.8 87.8,544 89.4,540.3 91.1,536.5 92.8,532.8 94.7,529.1 96.6,525.5 98.5,521.8 100.4,518.2 102.4,514.6 104.2,511 106.1,507.3 107.9,503.7 109.7,500.1 111.5,496.4 113.2,492.8 115,489.2 116.7,485.6 118.4,482 120.2,478.3 121.9,474.7 123.7,471.1 125.5,467.5 127.3,463.9 129.1,460.3 131,456.7 132.9,453.1 134.8,449.6 136.8,446 138.8,442.5 140.8,438.9 142.9,435.4 144.9,431.9 146.9,428.3 148.9,424.8 150.9,421.3 153,417.8 155,414.2 157,410.7 159,407.2 161,403.7 163,400.2 165.1,396.7 167.1,393.2 169.2,389.7 171.3,386.3 173.4,382.8 175.5,379.4 177.7,375.9 179.9,372.5 182.1,369.1 184.3,365.7 186.6,362.3 188.9,358.9 191.2,355.5 193.5,352.2 195.8,348.8 198.2,345.5 200.6,342.2 203,338.9 205.4,335.6 207.8,332.3 210.2,329 212.6,325.7 215.1,322.5 217.6,319.3 220,316.1 222.5,312.9 225,309.7 227.6,306.6 230.1,303.4 232.7,300.4 235.3,297.3 237.9,294.3 240.5,291.3 243.1,288.3 245.8,285.3 248.5,282.4 251.2,279.5 254,276.6 256.7,273.8 259.5,270.9 262.3,268.1 265.1,265.3 267.9,262.5 270.8,259.7 273.7,256.9 276.5,254.1 279.4,251.3 282.4,248.6 285.3,245.8 288.2,243 291.2,240.2 294.1,237.5 297.1,234.7 300,231.9 303,229.2 306,226.5 309,223.8 312,221.2 315.1,218.6" fill="none" stroke="#00c8c8" stroke-width="1.1" stroke-dasharray="1.5 1.5"/>
<polyline points="89,556.9 89.7,555.3 90.6,552.6 91.8,548.7 93.2,544.9 94.8,541.2 96.5,537.5 98.2,533.8 100.1,530.1 102,526.5 103.9,522.8 105.8,519.2 107.8,515.6 109.6,512 111.5,508.4 113.2,504.8 115,501.2 116.8,497.5 118.5,493.9 120.2,490.3 121.9,486.7 123.6,483.1 125.3,479.5 127,475.9 128.7,472.3 130.5,468.6 132.2,465.1 134,461.5 135.9,457.9 137.7,454.3 139.7,450.8 141.6,447.2 143.6,443.7 145.6,440.1 147.6,436.6 149.6,433.1 151.6,429.6 153.6,426.1 155.6,422.5 157.6,419 159.6,415.5 161.5,412 163.5,408.5 165.5,405 167.5,401.5 169.5,398 171.5,394.5 173.6,391 175.6,387.6 177.7,384.1 179.8,380.7 181.9,377.2 184.1,373.8 186.3,370.4 188.5,367 190.7,363.6 193,360.2 195.3,356.9 197.6,353.5 199.9,350.2 202.2,346.9 204.6,343.5 207,340.2 209.3,336.9 211.7,333.7 214.1,330.4 216.6,327.1 219,323.9 221.4,320.7 223.9,317.5 226.3,314.3 228.8,311.1 231.3,308 233.8,304.9 236.4,301.8 238.9,298.7 241.5,295.7 244.1,292.7 246.7,289.7 249.3,286.8 252,283.8 254.6,280.9 257.3,278 260,275.2 262.8,272.3 265.5,269.5 268.3,266.7 271.1,263.9 273.9,261.1 276.8,258.3 279.6,255.5 282.5,252.8 285.4,250 288.3,247.2 291.2,244.5 294.1,241.7 297.1,238.9 300,236.2 302.9,233.4 305.8,230.7 308.8,228 311.8,225.3 314.8,222.7 317.9,220.1" fill="none" stroke="#00c8c8" stroke-width="1.1" stroke-dasharray="1.5 1.5"/>
<polyline points="94.7,557.5 95.2,556.1 96.1,553.5 97.3,549.6 98.7,545.9 100.2,542.1 101.9,538.4 103.6,534.8 105.5,531.1 107.4,527.5 109.3,523.9 111.2,520.3 113.1,516.7 115,513 116.8,509.4 118.6,505.8 120.3,502.2 122,498.6 123.7,495 125.4,491.4 127.1,487.8 128.7,484.2 130.4,480.6 132.1,477 133.8,473.4 135.5,469.8 137.2,466.2 139,462.6 140.8,459 142.6,455.5 144.5,451.9 146.4,448.4 148.4,444.9 150.4,441.4 152.4,437.8 154.4,434.3 156.3,430.8 158.3,427.3 160.3,423.8 162.2,420.3 164.2,416.8 166.1,413.3 168.1,409.7 170,406.3 172,402.8 173.9,399.3 175.9,395.8 177.9,392.3 180,388.9 182,385.4 184.1,382 186.2,378.5 188.3,375.1 190.4,371.7 192.6,368.3 194.8,364.9 197.1,361.6 199.3,358.2 201.6,354.9 203.9,351.5 206.3,348.2 208.6,344.9 211,341.6 213.3,338.3 215.7,335 218.1,331.8 220.5,328.5 222.9,325.3 225.3,322.1 227.7,318.9 230.1,315.7 232.6,312.5 235.1,309.4 237.5,306.3 240,303.2 242.6,300.2 245.1,297.1 247.6,294.1 250.2,291.1 252.8,288.2 255.4,285.3 258,282.4 260.7,279.5 263.4,276.6 266.1,273.8 268.8,270.9 271.5,268.1 274.3,265.3 277.1,262.5 279.9,259.8 282.7,257 285.6,254.2 288.4,251.4 291.3,248.7 294.2,245.9 297.1,243.1 300,240.4 302.9,237.6 305.8,234.9 308.7,232.2 311.6,229.5 314.6,226.8 317.6,224.2 320.7,221.6" fill="none" stroke="#00c8c8" stroke-width="1.1" stroke-dasharray="1.5 1.5"/>
<polyline points="100.3,558.1 100.8,556.9 101.6,554.4 102.7,550.6 104.1,546.8 105.6,543.1 107.3,539.4 109,535.7 110.9,532.1 112.8,528.5 114.7,524.9 116.6,521.3 118.5,517.7 120.4,514.1 122.2,510.5 123.9,506.9 125.6,503.3 127.3,499.7 129,496.1 130.6,492.5 132.2,488.9 133.9,485.3 135.5,481.7 137.1,478.1 138.8,474.5 140.5,470.9 142.1,467.4 143.9,463.8 145.7,460.2 147.5,456.7 149.3,453.1 151.3,449.6 153.2,446.1 155.2,442.6 157.1,439.1 159.1,435.6 161.1,432 163,428.5 164.9,425 166.8,421.5 168.8,418 170.7,414.5 172.6,411 174.5,407.5 176.4,404 178.4,400.6 180.3,397.1 182.3,393.6 184.3,390.2 186.3,386.7 188.3,383.3 190.4,379.8 192.5,376.4 194.6,373 196.8,369.6 199,366.3 201.2,362.9 203.4,359.5 205.7,356.2 208,352.9 210.3,349.6 212.6,346.3 215,343 217.3,339.7 219.7,336.4 222,333.2 224.4,329.9 226.8,326.7 229.1,323.5 231.5,320.3 233.9,317.1 236.4,314 238.8,310.8 241.3,307.7 243.7,304.6 246.2,301.6 248.7,298.6 251.2,295.5 253.7,292.6 256.3,289.6 258.9,286.7 261.5,283.8 264.1,280.9 266.7,278 269.4,275.2 272,272.4 274.7,269.5 277.5,266.7 280.2,264 283,261.2 285.8,258.4 288.6,255.6 291.4,252.9 294.3,250.1 297.2,247.4 300,244.6 302.9,241.9 305.8,239.1 308.7,236.4 311.6,233.6 314.5,230.9 317.4,228.3 320.4,225.7 323.4,223.1" fill="none" stroke="#00c8c8" stroke-width="1.1" stroke-dasharray="1.5 1.5"/>
<polygon points="79,527.2 114.8,533.7 114.8,541 79,534.5" fill="#c00000"/>
<polyline points="81,531.2 112.8,537.7" fill="none" stroke="#800000" stroke-width="1.3"/>
<polyline points="79,534.5 94.9,513.1" fill="none" stroke="#e00000" stroke-width="1"/>
<polyline points="114.8,541 123.9,518.7" fill="none" stroke="#e00000" stroke-width="1"/>
<polygon points="86.8,512.3 122.6,519.1 122.6,526.6 86.8,519.7" fill="#c00000"/>
<polyline points="88.8,516.4 120.6,523.2" fill="none" stroke="#800000" stroke-width="1.3"/>
<polyline points="86.8,519.7 102.4,498.4" fill="none" stroke="#e00000" stroke-width="1"/>
<polyline points="122.6,526.6 131.1,504.2" fill="none" stroke="#e00000" stroke-width="1"/>
<polygon points="95.2,496 130.4,503.2 130.4,510.8 95.2,503.6" fill="#c00000"/>
<polyline points="97.2,500.2 128.4,507.4" fill="none" stroke="#800000" stroke-width="1.3"/>
<polyline points="95.2,503.6 110.4,482.2" fill="none" stroke="#e00000" stroke-width="1"/>
<polyline points="130.4,510.8 138.2,488.3" fill="none" stroke="#e00000" stroke-width="1"/>
<polygon points="106.3,480.7 116.4,482.9 119.4,496.7 109.3,494.5" fill="#c87800"/>
<polygon points="125.3,484.8 137.5,487.4 140.5,501.2 128.3,498.6" fill="#c87800"/>
<polygon points="103.3,480 137.5,487.4 137.5,489.6 103.3,482.2" fill="#c00000"/>
<polyline points="103.3,484.5 137.5,491.9" fill="none" stroke="#00a0a0" stroke-width="1.3"/>
<polygon points="111.1,464.7 144.3,472.3 144.3,480.3 111.1,472.7" fill="#c00000"/>
<polyline points="113.1,469.1 142.3,476.7" fill="none" stroke="#800000" stroke-width="1.3"/>
<polyline points="111.1,472.7 125.9,451.9" fill="none" stroke="#e00000" stroke-width="1"/>
<polyline points="144.3,480.3 152.1,458.2" fill="none" stroke="#e00000" stroke-width="1"/>
<polygon points="119.5,449.2 151.7,457 151.7,465.2 119.5,457.4" fill="#c00000"/>
<polyline points="121.5,453.7 149.7,461.5" fill="none" stroke="#800000" stroke-width="1.3"/>
<polyline points="119.5,457.4 134.3,437.2" fill="none" stroke="#e00000" stroke-width="1"/>
<polyline points="151.7,465.2 160,443.7" fill="none" stroke="#e00000" stroke-width="1"/>
<polygon points="127.8,434.7 159.5,442.8 159.5,451.1 127.8,443" fill="#c00000"/>
<polyline points="129.8,439.3 157.5,447.3" fill="none" stroke="#800000" stroke-width="1.3"/>
<polyline points="127.8,443 142.3,423.3" fill="none" stroke="#e00000" stroke-width="1"/>
<polyline points="159.5,451.1 167.6,430" fill="none" stroke="#e00000" stroke-width="1"/>
<polygon points="138.6,421.7 147.8,424.2 150.8,438.6 141.6,436.2" fill="#c87800"/>
<polygon points="155.9,426.3 166.9,429.3 169.9,443.7 158.9,440.8" fill="#c87800"/>
<polygon points="135.9,421 166.9,429.3 166.9,431.5 135.9,423.2" fill="#c00000"/>
<polyline points="135.9,425.5 166.9,433.8" fill="none" stroke="#00a0a0" stroke-width="1.3"/>
<polygon points="143.7,407.7 174,416.1 174,424.7 143.7,416.3" fill="#c00000"/>
<polyline points="145.7,412.5 172,420.9" fill="none" stroke="#800000" stroke-width="1.3"/>
<polyline points="143.7,416.3 157.7,397" fill="none" stroke="#e00000" stroke-width="1"/>
<polyline points="174,424.7 181.7,403.9" fill="none" stroke="#e00000" stroke-width="1"/>
<polygon points="151.6,394.6 181.1,403.1 181.1,411.9 151.6,403.4" fill="#c00000"/>
<polyline points="153.6,399.4 179.1,407.9" fill="none" stroke="#800000" stroke-width="1.3"/>
<polyline points="151.6,403.4 165.4,384.3" fill="none" stroke="#e00000" stroke-width="1"/>
<polyline points="181.1,411.9 188.7,391.3" fill="none" stroke="#e00000" stroke-width="1"/>
<polygon points="159.3,382.1 188.1,390.7 188.1,399.6 159.3,391" fill="#ff0000"/>
<polyline points="161.3,387 186.1,395.6" fill="none" stroke="#800000" stroke-width="1.3"/>
<polyline points="159.3,391 173,372.2" fill="none" stroke="#e00000" stroke-width="1"/>
<polyline points="188.1,399.6 195.8,379.3" fill="none" stroke="#e00000" stroke-width="1"/>
<polygon points="169.3,371.2 177.7,373.7 180.7,387.7 172.3,385.2" fill="#ffa000"/>
<polygon points="185,376 194.9,379.1 197.9,393.1 188,390" fill="#ffa000"/>
<polygon points="166.9,370.4 194.9,379.1 194.9,381.3 166.9,372.6" fill="#ff0000"/>
<polyline points="166.9,374.9 194.9,383.6" fill="none" stroke="#00a0a0" stroke-width="1.3"/>
<polygon points="174.4,359.2 201.9,367.9 201.9,376.9 174.4,368.2" fill="#ff0000"/>
<polyline points="176.4,364.1 199.9,372.9" fill="none" stroke="#800000" stroke-width="1.3"/>
<polyline points="174.4,368.2 187.8,350.4" fill="none" stroke="#e00000" stroke-width="1"/>
<polyline points="201.9,376.9 209.7,357.7" fill="none" stroke="#e00000" stroke-width="1"/>
<polygon points="182.1,348.2 209.1,357.1 209.1,366.1 182.1,357.2" fill="#ff0000"/>
<polyline points="184.1,353.1 207.1,362" fill="none" stroke="#800000" stroke-width="1.3"/>
<polyline points="182.1,357.2 195.2,340" fill="none" stroke="#e00000" stroke-width="1"/>
<polyline points="209.1,366.1 216.8,347.4" fill="none" stroke="#e00000" stroke-width="1"/>
<polygon points="189.6,337.8 216.2,346.8 216.2,355.7 189.6,346.7" fill="#ff0000"/>
<polyline points="191.6,342.7 214.2,351.7" fill="none" stroke="#800000" stroke-width="1.3"/>
<polyline points="189.6,346.7 202.5,330.1" fill="none" stroke="#e00000" stroke-width="1"/>
<polyline points="216.2,355.7 223.8,337.6" fill="none" stroke="#e00000" stroke-width="1"/>
<polygon points="199.4,328.4 207.2,331.1 210.2,345 202.4,342.3" fill="#ffa000"/>
<polygon points="214.1,333.5 223.4,336.8 226.4,350.7 217.1,347.4" fill="#ffa000"/>
<polygon points="197.2,327.6 223.4,336.8 223.4,339 197.2,329.8" fill="#ff0000"/>
<polyline points="197.2,332.1 223.4,341.3" fill="none" stroke="#00a0a0" stroke-width="1.3"/>
<polygon points="204.5,318 230.3,327.3 230.3,336.1 204.5,326.8" fill="#ff0000"/>
<polyline points="206.5,322.8 228.3,332.2" fill="none" stroke="#800000" stroke-width="1.3"/>
<polyline points="204.5,326.8 216.9,311.3" fill="none" stroke="#e00000" stroke-width="1"/>
<polyline points="230.3,336.1 237.5,318.9" fill="none" stroke="#e00000" stroke-width="1"/>
<polygon points="211.8,308.8 237.1,318.2 237.1,327 211.8,317.6" fill="#ff0000"/>
<polyline points="213.8,313.6 235.1,323" fill="none" stroke="#800000" stroke-width="1.3"/>
<polyline points="211.8,317.6 224.1,302.5" fill="none" stroke="#e00000" stroke-width="1"/>
<polyline points="237.1,327 244.2,310.2" fill="none" stroke="#e00000" stroke-width="1"/>
<polygon points="219.1,300 243.9,309.5 243.9,318.3 219.1,308.8" fill="#ff0000"/>
<polyline points="221.1,304.8 241.9,314.3" fill="none" stroke="#800000" stroke-width="1.3"/>
<polyline points="219.1,308.8 231.3,294.1" fill="none" stroke="#e00000" stroke-width="1"/>
<polyline points="243.9,318.3 250.9,301.8" fill="none" stroke="#e00000" stroke-width="1"/>
<polygon points="228.5,292.4 235.8,295.3 238.8,309.1 231.5,306.2" fill="#ffa000"/>
<polygon points="242,297.8 250.7,301.2 253.7,314.9 245,311.5" fill="#ffa000"/>
<polygon points="226.4,291.6 250.7,301.2 250.7,303.4 226.4,293.8" fill="#ff0000"/>
<polyline points="226.4,296.1 250.7,305.7" fill="none" stroke="#00a0a0" stroke-width="1.3"/>
<polygon points="233.8,283.6 257.5,293.2 257.5,301.9 233.8,292.3" fill="#ff0000"/>
<polyline points="235.8,288.4 255.5,298" fill="none" stroke="#800000" stroke-width="1.3"/>
<polyline points="233.8,292.3 245.7,278.3" fill="none" stroke="#e00000" stroke-width="1"/>
<polyline points="257.5,301.9 264.5,286.1" fill="none" stroke="#e00000" stroke-width="1"/>
<polygon points="241.2,275.9 264.2,285.5 264.2,294.2 241.2,284.6" fill="#ff0000"/>
<polyline points="243.2,280.7 262.2,290.3" fill="none" stroke="#800000" stroke-width="1.3"/>
<polyline points="241.2,284.6 253,270.9" fill="none" stroke="#e00000" stroke-width="1"/>
<polyline points="264.2,294.2 271.3,278.7" fill="none" stroke="#e00000" stroke-width="1"/>
<polygon points="248.6,268.5 271.1,278.1 271.1,286.8 248.6,277.2" fill="#ff0000"/>
<polyline points="250.6,273.2 269.1,282.9" fill="none" stroke="#800000" stroke-width="1.3"/>
<polyline points="248.6,277.2 260.3,263.6" fill="none" stroke="#e00000" stroke-width="1"/>
<polyline points="271.1,286.8 278.1,271.5" fill="none" stroke="#e00000" stroke-width="1"/>
<polygon points="257.9,262 264.5,264.9 267.5,278.6 260.9,275.7" fill="#ffa000"/>
<polygon points="270.1,267.4 278,270.9 281,284.6 273.1,281.1" fill="#ffa000"/>
<polygon points="256.1,261.2 278,270.9 278,273.1 256.1,263.4" fill="#ff0000"/>
<polyline points="256.1,265.7 278,275.4" fill="none" stroke="#00a0a0" stroke-width="1.3"/>
<polygon points="263.6,254 285,263.8 285,272.4 263.6,262.7" fill="#ff0000"/>
<polyline points="265.6,258.8 283,268.5" fill="none" stroke="#800000" stroke-width="1.3"/>
<polyline points="263.6,262.7 275.2,249.4" fill="none" stroke="#e00000" stroke-width="1"/>
<polyline points="285,272.4 292.3,257.3" fill="none" stroke="#e00000" stroke-width="1"/>
<polygon points="271.2,246.9 292.1,256.8 292.1,265.4 271.2,255.6" fill="#ff0000"/>
<polyline points="273.2,251.7 290.1,261.5" fill="none" stroke="#800000" stroke-width="1.3"/>
<polyline points="271.2,255.6 282.7,242.3" fill="none" stroke="#e00000" stroke-width="1"/>
<polyline points="292.1,265.4 299.5,250.4" fill="none" stroke="#e00000" stroke-width="1"/>
<polygon points="278.8,239.8 299.4,249.8 299.4,258.4 278.8,248.4" fill="#ff0000"/>
<polyline points="280.8,244.6 297.4,254.5" fill="none" stroke="#800000" stroke-width="1.3"/>
<polyline points="278.8,248.4 290.3,235.2" fill="none" stroke="#e00000" stroke-width="1"/>
<polyline points="299.4,258.4 306.8,243.5" fill="none" stroke="#e00000" stroke-width="1"/>
<polygon points="288.1,233.6 294.3,236.7 297.3,250.3 291.1,247.2" fill="#ffa000"/>
<polygon points="299.4,239.2 306.7,242.9 309.7,256.5 302.4,252.8" fill="#ffa000"/>
<polygon points="286.5,232.8 306.7,242.9 306.7,245.1 286.5,235" fill="#ff0000"/>
<polyline points="286.5,237.3 306.7,247.4" fill="none" stroke="#00a0a0" stroke-width="1.3"/>
<polygon points="294.1,225.7 314,236 314,244.6 294.1,234.3" fill="#ff0000"/>
<polyline points="296.1,230.4 312,240.7" fill="none" stroke="#800000" stroke-width="1.3"/>
<polyline points="294.1,234.3 305.5,221.3" fill="none" stroke="#e00000" stroke-width="1"/>
<polyline points="314,244.6 321.6,229.9" fill="none" stroke="#e00000" stroke-width="1"/>
<polygon points="301.9,218.9 321.5,229.3 321.5,237.8 301.9,227.4" fill="#ff0000"/>
<polygon points="309.9,212.3 329.1,222.9 329.1,231.4 309.9,220.8" fill="#ff0000"/>
<polygon points="319.7,207 325.6,210.4 328.6,223.8 322.7,220.5" fill="#ffa000"/>
<polygon points="330.2,213 337.1,216.9 340.1,230.4 333.2,226.5" fill="#ffa000"/>
<polygon points="318.1,206.2 337.1,216.9 337.1,219.1 318.1,208.4" fill="#ff0000"/>
<polyline points="318.1,210.7 337.1,221.4" fill="none" stroke="#00a0a0" stroke-width="1.3"/>
<polygon points="326.6,200.3 345.3,211.3 345.3,219.7 326.6,208.8" fill="#ff0000"/>
<polygon points="335.3,194.7 353.8,205.9 353.8,214.3 335.3,203.1" fill="#ff0000"/>
<polygon points="344,189.1 362.3,200.5 362.3,208.9 344,197.5" fill="#ff0000"/>
<polygon points="354,184.5 359.6,188.1 362.6,201.5 357,197.8" fill="#ffa000"/>
<polygon points="363.9,190.9 370.5,195.1 373.5,208.5 366.9,204.2" fill="#ffa000"/>
<polygon points="352.5,183.6 370.5,195.1 370.5,197.3 352.5,185.8" fill="#ff0000"/>
<polyline points="352.5,188.1 370.5,199.6" fill="none" stroke="#00a0a0" stroke-width="1.3"/>
<polygon points="361,178 378.4,189.5 378.4,197.8 361,186.3" fill="#ff0000"/>
<polygon points="369.6,172.6 386.4,184.1 386.4,192.4 369.6,180.9" fill="#ff0000"/>
<polygon points="378.4,167.4 394.8,179 394.8,187.3 378.4,175.7" fill="#ffff00"/>
<polygon points="387.3,162.4 403.5,174.2 403.5,182.4 387.3,170.6" fill="#ff0000"/>
<polygon points="396.4,157.5 412.2,169.5 412.2,177.7 396.4,165.7" fill="#ff0000"/>
<polygon points="405.5,152.9 421.1,165 421.1,173.2 405.5,161" fill="#ffff00"/>
<polygon points="414.7,148.3 429.9,160.6 429.9,168.7 414.7,156.4" fill="#ff0000"/>
<polygon points="423.9,143.8 438.8,156.2 438.8,164.3 423.9,151.9" fill="#ff0000"/>
<polygon points="433.1,139.3 447.7,151.9 447.7,160 433.1,147.4" fill="#ffff00"/>
<polygon points="442.4,134.9 456.8,147.7 456.8,155.7 442.4,142.9" fill="#ff0000"/>
<polygon points="451.8,130.8 465.8,143.7 465.8,151.7 451.8,138.8" fill="#ff0000"/>
<polygon points="461.3,127.1 474.9,140 474.9,148 461.3,135.1" fill="#ffff00"/>
<polygon points="470.9,123.8 484.1,136.6 484.1,144.6 470.9,131.8" fill="#ff0000"/>
<polygon points="480.6,120.6 493.5,133.5 499.4,133.5 486.6,120.6" fill="#ff0000"/>
<polygon points="490.4,117.3 503.1,130.4 509.1,130.4 496.3,117.3" fill="#ffff00"/>
<polygon points="500.2,114 513,127.5 518.9,127.5 506.1,114" fill="#ff0000"/>
<polygon points="510,110.9 522.8,124.7 528.6,124.7 515.9,110.9" fill="#ff0000"/>
<polygon points="519.8,108 532.5,121.9 538.3,121.9 525.6,108" fill="#ffff00"/>
<polygon points="529.5,105.1 542,119.2 547.8,119.2 535.3,105.1" fill="#ff0000"/>
<polygon points="539.1,102.3 551.4,116.5 557.2,116.5 544.9,102.3" fill="#ff0000"/>
<polygon points="548.7,99.7 560.7,113.9 566.5,113.9 554.5,99.7" fill="#ffff00"/>
<polygon points="558.3,97.3 570.1,111.4 575.8,111.4 564,97.3" fill="#ff0000"/>
<polygon points="567.8,95.1 579.5,109.1 585.2,109.1 573.5,95.1" fill="#ff0000"/>
<polygon points="577.3,93.1 588.9,106.9 594.6,106.9 583,93.1" fill="#ffff00"/>
<polygon points="586.8,91.2 598.3,104.9 604,104.9 592.5,91.2" fill="#ff0000"/>
<polygon points="596.4,89.3 607.9,103 613.5,103 602,89.3" fill="#ff0000"/>
<polygon points="605.9,87.4 617.5,101.2 623,101.2 611.5,87.4" fill="#ffff00"/>
<polygon points="615.5,85.6 627.2,99.5 632.7,99.5 621,85.6" fill="#ff0000"/>
<polygon points="625.1,83.9 636.9,98 642.4,98 630.6,83.9" fill="#ff0000"/>
<polygon points="634.7,82.4 646.6,96.6 652.1,96.6 640.1,82.4" fill="#ffff00"/>
<polygon points="644.3,81 656.4,95.4 661.7,95.4 649.6,81" fill="#ff0000"/>
<polygon points="653.9,79.7 666.1,94.3 671.3,94.3 659.1,79.7" fill="#ff0000"/>
<polygon points="663.4,78.6 675.8,93.2 681,93.2 668.6,78.6" fill="#ffff00"/>
<polygon points="673,77.5 685.4,92.3 690.6,92.3 678.1,77.5" fill="#ff0000"/>
<polygon points="682.5,76.4 695,91.4 700.1,91.4 687.6,76.4" fill="#ff0000"/>
<polygon points="692,75.5 704.6,90.6 709.6,90.6 696.9,75.5" fill="#ffff00"/>
<polygon points="701.4,74.7 714.1,89.9 719,89.9 706.3,74.7" fill="#ff0000"/>
<polygon points="710.7,74 723.5,89.2 728.3,89.2 715.5,74" fill="#ff0000"/>
<polyline points="31.3,531.5 73,538.6" fill="none" stroke="#008000" stroke-width="3.6"/>
<polyline points="108.5,544.7 135.6,549.4" fill="none" stroke="#008000" stroke-width="3.9"/>
<rect x="71.3" y="536.9" width="2.4" height="3.4" fill="#00e000"/>
<rect x="107.3" y="543" width="2.4" height="3.4" fill="#00e000"/>
<polyline points="36.9,519.6 78.5,527.1" fill="none" stroke="#008000" stroke-width="3.6"/>
<polyline points="113.8,533.5 140.8,538.4" fill="none" stroke="#008000" stroke-width="3.9"/>
<rect x="76.7" y="525.3" width="2.4" height="3.4" fill="#00e000"/>
<rect x="112.6" y="531.8" width="2.4" height="3.4" fill="#00e000"/>
<polyline points="44.8,504.2 86.3,512.2" fill="none" stroke="#008000" stroke-width="3.5"/>
<polyline points="121.5,518.9 148.5,524.1" fill="none" stroke="#008000" stroke-width="4"/>
<rect x="84.5" y="510.4" width="2.4" height="3.4" fill="#00e000"/>
<rect x="120.3" y="517.2" width="2.4" height="3.4" fill="#00e000"/>
<polyline points="53.9,487.5 94.7,495.9" fill="none" stroke="#008000" stroke-width="3.5"/>
<polyline points="129.4,503 155.9,508.4" fill="none" stroke="#008000" stroke-width="4"/>
<rect x="93" y="494.1" width="2.4" height="3.4" fill="#00e000"/>
<rect x="128.2" y="501.3" width="2.4" height="3.4" fill="#00e000"/>
<polyline points="63.1,471.3 102.8,479.9" fill="none" stroke="#008000" stroke-width="3.5"/>
<polyline points="136.5,487.2 162.3,492.8" fill="none" stroke="#008000" stroke-width="4.1"/>
<rect x="101.1" y="478.1" width="2.4" height="3.4" fill="#00e000"/>
<rect x="135.3" y="485.5" width="2.4" height="3.4" fill="#00e000"/>
<polyline points="72.2,455.8 110.7,464.6" fill="none" stroke="#008000" stroke-width="3.5"/>
<polyline points="143.3,472.1 168.3,477.8" fill="none" stroke="#008000" stroke-width="4.1"/>
<rect x="109" y="462.8" width="2.4" height="3.4" fill="#00e000"/>
<rect x="142.1" y="470.4" width="2.4" height="3.4" fill="#00e000"/>
<polyline points="81.6,440.1 119,449.1" fill="none" stroke="#008000" stroke-width="3.5"/>
<polyline points="150.8,456.8 175.1,462.7" fill="none" stroke="#008000" stroke-width="4.2"/>
<rect x="117.3" y="447.3" width="2.4" height="3.4" fill="#00e000"/>
<rect x="149.6" y="455.1" width="2.4" height="3.4" fill="#00e000"/>
<polyline points="90.6,425.3 127.3,434.6" fill="none" stroke="#008000" stroke-width="3.5"/>
<polyline points="158.5,442.6 182.4,448.6" fill="none" stroke="#008000" stroke-width="4.2"/>
<rect x="125.7" y="432.8" width="2.4" height="3.4" fill="#00e000"/>
<rect x="157.3" y="440.9" width="2.4" height="3.4" fill="#00e000"/>
<polyline points="99.4,411.3 135.4,420.9" fill="none" stroke="#008000" stroke-width="3.4"/>
<polyline points="166,429 189.4,435.2" fill="none" stroke="#008000" stroke-width="4.3"/>
<rect x="133.8" y="419.1" width="2.4" height="3.4" fill="#00e000"/>
<rect x="164.8" y="427.3" width="2.4" height="3.4" fill="#00e000"/>
<polyline points="108.1,397.9 143.3,407.6" fill="none" stroke="#008000" stroke-width="3.4"/>
<polyline points="173.2,415.9 196,422.2" fill="none" stroke="#008000" stroke-width="4.3"/>
<rect x="141.6" y="405.8" width="2.4" height="3.4" fill="#00e000"/>
<rect x="172" y="414.2" width="2.4" height="3.4" fill="#00e000"/>
<polyline points="116.9,384.7 151.2,394.5" fill="none" stroke="#008000" stroke-width="3.4"/>
<polyline points="180.3,402.9 202.5,409.3" fill="none" stroke="#008000" stroke-width="4.4"/>
<rect x="149.5" y="392.7" width="2.4" height="3.4" fill="#00e000"/>
<rect x="179.1" y="401.2" width="2.4" height="3.4" fill="#00e000"/>
<polyline points="125.6,372.1 158.9,382" fill="none" stroke="#008000" stroke-width="3.4"/>
<polyline points="187.2,390.5 208.9,396.9" fill="none" stroke="#008000" stroke-width="4.4"/>
<rect x="157.3" y="380.2" width="2.4" height="3.4" fill="#00e000"/>
<rect x="186" y="388.8" width="2.4" height="3.4" fill="#00e000"/>
<polyline points="134,360.2 166.5,370.3" fill="none" stroke="#008000" stroke-width="3.4"/>
<polyline points="194.1,378.8 215.3,385.3" fill="none" stroke="#008000" stroke-width="4.4"/>
<rect x="164.9" y="368.5" width="2.4" height="3.4" fill="#00e000"/>
<rect x="192.9" y="377.1" width="2.4" height="3.4" fill="#00e000"/>
<polyline points="142.2,348.9 174,359.1" fill="none" stroke="#008000" stroke-width="3.3"/>
<polyline points="201.1,367.7 221.8,374.3" fill="none" stroke="#008000" stroke-width="4.5"/>
<rect x="172.4" y="357.2" width="2.4" height="3.4" fill="#00e000"/>
<rect x="199.9" y="366" width="2.4" height="3.4" fill="#00e000"/>
<polyline points="150.4,337.8 181.7,348.1" fill="none" stroke="#008000" stroke-width="3.3"/>
<polyline points="208.3,356.9 228.7,363.6" fill="none" stroke="#008000" stroke-width="4.5"/>
<rect x="180.1" y="346.3" width="2.4" height="3.4" fill="#00e000"/>
<rect x="207.1" y="355.2" width="2.4" height="3.4" fill="#00e000"/>
<polyline points="158.4,327.1 189.2,337.6" fill="none" stroke="#008000" stroke-width="3.3"/>
<polyline points="215.5,346.6 235.5,353.4" fill="none" stroke="#008000" stroke-width="4.5"/>
<rect x="187.6" y="335.8" width="2.4" height="3.4" fill="#00e000"/>
<rect x="214.3" y="344.9" width="2.4" height="3.4" fill="#00e000"/>
<polyline points="166.4,316.8 196.8,327.5" fill="none" stroke="#008000" stroke-width="3.3"/>
<polyline points="222.6,336.5 242.4,343.5" fill="none" stroke="#008000" stroke-width="4.5"/>
<rect x="195.2" y="325.6" width="2.4" height="3.4" fill="#00e000"/>
<rect x="221.4" y="334.8" width="2.4" height="3.4" fill="#00e000"/>
<polyline points="174.3,307 204.2,317.8" fill="none" stroke="#008000" stroke-width="3.2"/>
<polyline points="229.6,327 249,334" fill="none" stroke="#008000" stroke-width="4.6"/>
<rect x="202.6" y="316" width="2.4" height="3.4" fill="#00e000"/>
<rect x="228.4" y="325.3" width="2.4" height="3.4" fill="#00e000"/>
<polyline points="182.2,297.8 211.4,308.7" fill="none" stroke="#008000" stroke-width="3.2"/>
<polyline points="236.3,317.9 255.4,325" fill="none" stroke="#008000" stroke-width="4.6"/>
<rect x="209.9" y="306.8" width="2.4" height="3.4" fill="#00e000"/>
<rect x="235.1" y="316.2" width="2.4" height="3.4" fill="#00e000"/>
<polyline points="190.1,288.9 218.7,299.9" fill="none" stroke="#008000" stroke-width="3.2"/>
<polyline points="243.2,309.2 261.7,316.3" fill="none" stroke="#008000" stroke-width="4.6"/>
<rect x="217.2" y="297.5" width="2.4" height="4.5" fill="#00e000"/>
<rect x="242" y="307" width="2.4" height="4.5" fill="#00e000"/>
<polyline points="198.2,280.5 226.1,291.5" fill="none" stroke="#008000" stroke-width="3.2"/>
<polyline points="250,300.9 267.9,308" fill="none" stroke="#008000" stroke-width="4.6"/>
<rect x="224.5" y="289.1" width="2.4" height="4.5" fill="#00e000"/>
<rect x="248.8" y="298.6" width="2.4" height="4.5" fill="#00e000"/>
<polyline points="206.3,272.5 233.4,283.5" fill="none" stroke="#008000" stroke-width="3.1"/>
<polyline points="256.8,292.9 274.1,299.9" fill="none" stroke="#008000" stroke-width="4.7"/>
<rect x="231.9" y="281.1" width="2.4" height="4.5" fill="#00e000"/>
<rect x="255.6" y="290.7" width="2.4" height="4.5" fill="#00e000"/>
<polyline points="214.5,264.8 240.8,275.8" fill="none" stroke="#008000" stroke-width="3.1"/>
<polyline points="263.6,285.2 280.3,292.2" fill="none" stroke="#008000" stroke-width="4.7"/>
<rect x="239.3" y="273.4" width="2.4" height="4.5" fill="#00e000"/>
<rect x="262.4" y="283" width="2.4" height="4.5" fill="#00e000"/>
<polyline points="222.8,257.4 248.3,268.3" fill="none" stroke="#008000" stroke-width="3.1"/>
<polyline points="270.4,277.8 286.5,284.7" fill="none" stroke="#008000" stroke-width="4.7"/>
<rect x="246.8" y="265.9" width="2.4" height="4.5" fill="#00e000"/>
<rect x="269.2" y="275.6" width="2.4" height="4.5" fill="#00e000"/>
<polyline points="231,250.1 255.8,261.1" fill="none" stroke="#008000" stroke-width="3.1"/>
<polyline points="277.3,270.6 292.9,277.5" fill="none" stroke="#008000" stroke-width="4.7"/>
<rect x="254.3" y="258.7" width="2.4" height="4.5" fill="#00e000"/>
<rect x="276.1" y="268.3" width="2.4" height="4.5" fill="#00e000"/>
<polyline points="239.3,243 263.3,253.9" fill="none" stroke="#008000" stroke-width="3"/>
<polyline points="284.4,263.5 299.4,270.3" fill="none" stroke="#008000" stroke-width="4.8"/>
<rect x="261.8" y="251.5" width="2.4" height="4.5" fill="#00e000"/>
<rect x="283.2" y="261.3" width="2.4" height="4.5" fill="#00e000"/>
<polyline points="247.4,235.8 270.9,246.8" fill="none" stroke="#008000" stroke-width="3"/>
<polyline points="291.5,256.5 306.1,263.3" fill="none" stroke="#008000" stroke-width="4.8"/>
<rect x="269.4" y="244.4" width="2.4" height="4.5" fill="#00e000"/>
<rect x="290.3" y="254.2" width="2.4" height="4.5" fill="#00e000"/>
<polyline points="255.5,228.6 278.5,239.7" fill="none" stroke="#008000" stroke-width="3"/>
<polyline points="298.8,249.5 313,256.4" fill="none" stroke="#008000" stroke-width="4.8"/>
<rect x="277" y="237.3" width="2.4" height="4.5" fill="#00e000"/>
<rect x="297.6" y="247.3" width="2.4" height="4.5" fill="#00e000"/>
<polyline points="263.6,221.4 286.2,232.6" fill="none" stroke="#008000" stroke-width="3"/>
<polyline points="306.2,242.6 320,249.5" fill="none" stroke="#008000" stroke-width="4.8"/>
<rect x="284.7" y="230.2" width="2.4" height="4.5" fill="#00e000"/>
<rect x="305" y="240.3" width="2.4" height="4.5" fill="#00e000"/>
<polyline points="271.7,214.2 293.8,225.6" fill="none" stroke="#008000" stroke-width="3"/>
<polyline points="313.5,235.7 327,242.7" fill="none" stroke="#008000" stroke-width="4.8"/>
<rect x="292.3" y="223.2" width="2.4" height="4.5" fill="#00e000"/>
<rect x="312.3" y="233.5" width="2.4" height="4.5" fill="#00e000"/>
<polyline points="280,207.2 301.6,218.7" fill="none" stroke="#008000" stroke-width="3"/>
<polyline points="320.9,229 334,236" fill="none" stroke="#008000" stroke-width="4.8"/>
<rect x="300.1" y="216.3" width="2.4" height="4.5" fill="#00e000"/>
<rect x="319.7" y="226.7" width="2.4" height="4.5" fill="#00e000"/>
<polyline points="288.4,200.5 309.6,212.2" fill="none" stroke="#008000" stroke-width="3"/>
<polyline points="328.6,222.6 341.4,229.6" fill="none" stroke="#008000" stroke-width="4.8"/>
<rect x="308.1" y="209.8" width="2.4" height="4.5" fill="#00e000"/>
<rect x="327.4" y="220.4" width="2.4" height="4.5" fill="#00e000"/>
<polyline points="297.2,194.3 317.9,206" fill="none" stroke="#008000" stroke-width="3"/>
<polyline points="336.6,216.6 349,223.7" fill="none" stroke="#008000" stroke-width="4.8"/>
<polygon points="338.7,220.2 346.4,224.6 346.4,227.6 338.7,223.2" fill="#ff0000"/>
<rect x="316.4" y="203.6" width="2.4" height="4.5" fill="#00e000"/>
<rect x="335.4" y="214.4" width="2.4" height="4.5" fill="#00e000"/>
<polyline points="306.2,188.3 326.4,200.2" fill="none" stroke="#008000" stroke-width="3"/>
<polyline points="344.8,211 356.9,218" fill="none" stroke="#008000" stroke-width="4.8"/>
<polygon points="346.9,214.5 354.5,219 354.5,222 346.9,217.5" fill="#ff0000"/>
<rect x="324.9" y="197.8" width="2.4" height="4.5" fill="#00e000"/>
<rect x="343.6" y="208.7" width="2.4" height="4.5" fill="#00e000"/>
<polyline points="315.2,182.5 335,194.5" fill="none" stroke="#008000" stroke-width="3.1"/>
<polyline points="353.3,205.6 365.1,212.7" fill="none" stroke="#008000" stroke-width="4.7"/>
<polygon points="355.3,209.1 362.8,213.7 362.8,216.7 355.3,212.1" fill="#ff0000"/>
<rect x="333.6" y="192.1" width="2.4" height="4.5" fill="#00e000"/>
<rect x="352.1" y="203.3" width="2.4" height="4.5" fill="#00e000"/>
<polyline points="324.3,176.9 343.7,189" fill="none" stroke="#008000" stroke-width="3.1"/>
<polyline points="361.8,200.2 373.3,207.4" fill="none" stroke="#008000" stroke-width="4.7"/>
<polygon points="363.7,203.8 371.1,208.4 371.1,211.4 363.7,206.8" fill="#ffd800"/>
<rect x="342.3" y="186.6" width="2.4" height="4.5" fill="#00e000"/>
<rect x="360.6" y="198" width="2.4" height="4.5" fill="#00e000"/>
<polyline points="333.5,171.3 352.3,183.4" fill="none" stroke="#008000" stroke-width="3.1"/>
<polyline points="370,194.8 381.1,202" fill="none" stroke="#008000" stroke-width="4.7"/>
<polygon points="371.9,198.4 379,203 379,206 371.9,201.4" fill="#ff0000"/>
<rect x="350.9" y="181" width="2.4" height="4.5" fill="#00e000"/>
<rect x="368.8" y="192.5" width="2.4" height="4.5" fill="#00e000"/>
<polyline points="342.8,165.9 360.8,177.9" fill="none" stroke="#008000" stroke-width="3.1"/>
<polyline points="377.9,189.2 388.6,196.3" fill="none" stroke="#008000" stroke-width="4.7"/>
<polygon points="379.7,192.8 386.6,197.4 386.6,200.4 379.7,195.8" fill="#ff0000"/>
<rect x="359.4" y="175.5" width="2.4" height="4.5" fill="#00e000"/>
<rect x="376.7" y="187" width="2.4" height="4.5" fill="#00e000"/>
<polyline points="352.1,160.6 369.4,172.4" fill="none" stroke="#008000" stroke-width="3.1"/>
<polyline points="386,183.8 396.2,190.8" fill="none" stroke="#008000" stroke-width="4.7"/>
<polygon points="387.7,187.4 394.4,191.9 394.4,194.9 387.7,190.4" fill="#ff0000"/>
<rect x="368" y="170" width="2.4" height="4.5" fill="#00e000"/>
<rect x="384.8" y="181.6" width="2.4" height="4.5" fill="#00e000"/>
<polyline points="361.4,155.4 378.2,167.2" fill="none" stroke="#008000" stroke-width="3.1"/>
<polyline points="394.4,178.7 404.3,185.7" fill="none" stroke="#008000" stroke-width="4.7"/>
<polygon points="396.1,182.3 402.5,186.8 402.5,189.8 396.1,185.3" fill="#ffd800"/>
<rect x="376.8" y="164.8" width="2.4" height="4.5" fill="#00e000"/>
<rect x="393.2" y="176.5" width="2.4" height="4.5" fill="#00e000"/>
<polyline points="370.9,150.3 387.1,162.2" fill="none" stroke="#008000" stroke-width="3.1"/>
<polyline points="403,173.9 412.6,180.9" fill="none" stroke="#008000" stroke-width="4.7"/>
<polygon points="404.7,177.4 411,182 411,185 404.7,180.4" fill="#ff0000"/>
<rect x="385.7" y="159.8" width="2.4" height="4.5" fill="#00e000"/>
<rect x="401.8" y="171.6" width="2.4" height="4.5" fill="#00e000"/>
<polyline points="380.4,145.4 396.2,157.4" fill="none" stroke="#008000" stroke-width="3.1"/>
<polyline points="411.8,169.2 421.1,176.2" fill="none" stroke="#008000" stroke-width="4.7"/>
<polygon points="413.4,172.8 419.6,177.4 419.6,180.4 413.4,175.8" fill="#ff0000"/>
<rect x="394.8" y="155" width="2.4" height="4.5" fill="#00e000"/>
<rect x="410.6" y="167" width="2.4" height="4.5" fill="#00e000"/>
<polyline points="390,140.7 405.3,152.7" fill="none" stroke="#008000" stroke-width="3.1"/>
<polyline points="420.7,164.7 429.7,171.7" fill="none" stroke="#008000" stroke-width="4.7"/>
<polygon points="422.2,168.3 428.2,172.9 428.2,175.9 422.2,171.3" fill="#ff0000"/>
<rect x="403.9" y="150.3" width="2.4" height="4.5" fill="#00e000"/>
<rect x="419.5" y="162.4" width="2.4" height="4.5" fill="#00e000"/>
<polyline points="399.6,136.1 414.5,148.1" fill="none" stroke="#008000" stroke-width="3.1"/>
<polyline points="429.5,160.3 438.3,167.3" fill="none" stroke="#008000" stroke-width="4.7"/>
<polygon points="431.1,163.9 436.9,168.6 436.9,171.6 431.1,166.9" fill="#ffd800"/>
<rect x="413.1" y="145.7" width="2.4" height="4.5" fill="#00e000"/>
<rect x="428.3" y="158" width="2.4" height="4.5" fill="#00e000"/>
<polyline points="409.2,131.5 423.7,143.6" fill="none" stroke="#008000" stroke-width="3.1"/>
<polyline points="438.4,155.9 446.9,163" fill="none" stroke="#008000" stroke-width="4.7"/>
<polygon points="439.9,159.5 445.6,164.2 445.6,167.2 439.9,162.5" fill="#ff0000"/>
<rect x="422.3" y="141.2" width="2.4" height="4.5" fill="#00e000"/>
<rect x="437.2" y="153.7" width="2.4" height="4.5" fill="#00e000"/>
<polyline points="418.9,127 432.9,139.1" fill="none" stroke="#008000" stroke-width="3.1"/>
<polyline points="447.4,151.6 455.6,158.6" fill="none" stroke="#008000" stroke-width="4.7"/>
<polygon points="448.9,155.2 454.4,159.9 454.4,162.9 448.9,158.2" fill="#ff0000"/>
<rect x="431.6" y="136.7" width="2.4" height="4.5" fill="#00e000"/>
<rect x="446.2" y="149.3" width="2.4" height="4.5" fill="#00e000"/>
<polyline points="428.6,122.6 442.2,134.7" fill="none" stroke="#008000" stroke-width="3.1"/>
<polyline points="456.4,147.4 464.3,154.4" fill="none" stroke="#008000" stroke-width="4.7"/>
<polygon points="457.8,151 463.2,155.7 463.2,158.7 457.8,154" fill="#ff0000"/>
<rect x="440.8" y="132.3" width="2.4" height="4.5" fill="#00e000"/>
<rect x="455.2" y="145.1" width="2.4" height="4.5" fill="#00e000"/>
<polyline points="438.4,118.5 451.6,130.6" fill="none" stroke="#008000" stroke-width="3.1"/>
<polyline points="465.5,143.4 473.1,150.4" fill="none" stroke="#008000" stroke-width="4.7"/>
<polygon points="466.9,147 472.1,151.8 472.1,154.8 466.9,150" fill="#ffd800"/>
<rect x="450.2" y="128.2" width="2.4" height="4.5" fill="#00e000"/>
<rect x="464.3" y="141.1" width="2.4" height="4.5" fill="#00e000"/>
<polyline points="448.4,114.9 461.1,127" fill="none" stroke="#008000" stroke-width="3.1"/>
<polyline points="474.6,139.7 481.9,146.7" fill="none" stroke="#008000" stroke-width="4.7"/>
<polygon points="475.9,143.3 480.9,148.1 480.9,151.1 475.9,146.3" fill="#ff0000"/>
<rect x="459.7" y="124.6" width="2.4" height="4.5" fill="#00e000"/>
<rect x="473.4" y="137.5" width="2.4" height="4.5" fill="#00e000"/>
<polyline points="458.5,111.8 470.7,123.7" fill="none" stroke="#008000" stroke-width="3.2"/>
<polyline points="483.7,136.3 490.9,143.3" fill="none" stroke="#008000" stroke-width="4.6"/>
<polygon points="485,139.9 489.9,144.6 489.9,147.6 485,142.9" fill="#ff0000"/>
<rect x="469.3" y="121.3" width="2.4" height="4.5" fill="#00e000"/>
<rect x="482.5" y="134.1" width="2.4" height="4.5" fill="#00e000"/>
<polyline points="468.5,108.6 480.4,120.5" fill="none" stroke="#008000" stroke-width="3.2"/>
<polyline points="493.1,133.2 500.1,140.1" fill="none" stroke="#008000" stroke-width="4.6"/>
<polygon points="494.4,136.7 499.1,141.5 499.1,144.5 494.4,139.7" fill="#ff0000"/>
<rect x="479.1" y="118" width="2.4" height="4.5" fill="#00e000"/>
<rect x="491.9" y="130.9" width="2.4" height="4.5" fill="#00e000"/>
<polyline points="478.5,105.2 490.2,117.2" fill="none" stroke="#008000" stroke-width="3.2"/>
<polyline points="502.8,130.1 509.7,137.1" fill="none" stroke="#008000" stroke-width="4.6"/>
<polygon points="504.1,133.7 508.7,138.5 508.7,141.5 504.1,136.7" fill="#ffd800"/>
<rect x="488.8" y="114.8" width="2.4" height="4.5" fill="#00e000"/>
<rect x="501.6" y="127.8" width="2.4" height="4.5" fill="#00e000"/>
<polyline points="488.4,101.7 500,113.9" fill="none" stroke="#008000" stroke-width="3.2"/>
<polyline points="512.6,127.1 519.5,134.3" fill="none" stroke="#008000" stroke-width="4.6"/>
<polygon points="513.9,130.8 518.6,135.7 518.6,138.7 513.9,133.8" fill="#ff0000"/>
<rect x="498.7" y="111.5" width="2.4" height="4.5" fill="#00e000"/>
<rect x="511.4" y="124.9" width="2.4" height="4.5" fill="#00e000"/>
<polyline points="498.3,98.4 509.8,110.8" fill="none" stroke="#008000" stroke-width="3.2"/>
<polyline points="522.5,124.3 529.3,131.6" fill="none" stroke="#008000" stroke-width="4.6"/>
<polygon points="523.7,128 528.3,133 528.3,136 523.7,131" fill="#ff0000"/>
<rect x="508.5" y="108.3" width="2.4" height="4.5" fill="#00e000"/>
<rect x="521.3" y="122.1" width="2.4" height="4.5" fill="#00e000"/>
<polyline points="508.2,95.3 519.6,107.8" fill="none" stroke="#008000" stroke-width="3.2"/>
<polyline points="532.2,121.6 538.9,129" fill="none" stroke="#008000" stroke-width="4.6"/>
<polygon points="533.4,125.3 538,130.3 538,133.3 533.4,128.3" fill="#ff0000"/>
<rect x="518.3" y="105.4" width="2.4" height="4.5" fill="#00e000"/>
<rect x="531" y="119.4" width="2.4" height="4.5" fill="#00e000"/>
<polyline points="518.2,92.4 529.3,104.9" fill="none" stroke="#008000" stroke-width="3.2"/>
<polyline points="541.7,118.9 548.3,126.4" fill="none" stroke="#008000" stroke-width="4.6"/>
<polygon points="542.9,122.6 547.4,127.7 547.4,130.7 542.9,125.6" fill="#ffd800"/>
<rect x="528" y="102.5" width="2.4" height="4.5" fill="#00e000"/>
<rect x="540.5" y="116.6" width="2.4" height="4.5" fill="#00e000"/>
<polyline points="528.1,89.6 539,102.1" fill="none" stroke="#008000" stroke-width="3.2"/>
<polyline points="551.1,116.2 557.6,123.7" fill="none" stroke="#008000" stroke-width="4.5"/>
<polygon points="552.3,119.8 556.7,124.9 556.7,127.9 552.3,122.8" fill="#ff0000"/>
<rect x="537.6" y="99.7" width="2.4" height="4.5" fill="#00e000"/>
<rect x="549.9" y="113.9" width="2.4" height="4.5" fill="#00e000"/>
<polyline points="538.1,87.1 548.6,99.5" fill="none" stroke="#008000" stroke-width="3.1"/>
<polyline points="560.4,113.6 566.7,121" fill="none" stroke="#008000" stroke-width="4.4"/>
<polygon points="561.6,117.1 565.9,122.2 565.9,125.2 561.6,120.1" fill="#ff0000"/>
<rect x="547.2" y="97.1" width="2.4" height="4.5" fill="#00e000"/>
<rect x="559.2" y="111.3" width="2.4" height="4.5" fill="#00e000"/>
<polyline points="548.1,84.9 558.1,97.1" fill="none" stroke="#008000" stroke-width="3.1"/>
<polyline points="569.6,111.1 575.7,118.5" fill="none" stroke="#008000" stroke-width="4.3"/>
<polygon points="570.7,114.6 574.8,119.6 574.8,122.6 570.7,117.6" fill="#ff0000"/>
<rect x="556.8" y="94.7" width="2.4" height="4.5" fill="#00e000"/>
<rect x="568.4" y="108.8" width="2.4" height="4.5" fill="#00e000"/>
<polyline points="558,82.9 567.7,95" fill="none" stroke="#008000" stroke-width="3"/>
<polyline points="578.7,108.8 584.5,116.1" fill="none" stroke="#008000" stroke-width="4.2"/>
<polygon points="579.8,112.2 583.7,117.1 583.7,120.1 579.8,115.2" fill="#ffd800"/>
<rect x="566.3" y="92.6" width="2.4" height="4.5" fill="#00e000"/>
<rect x="577.5" y="106.5" width="2.4" height="4.5" fill="#00e000"/>
<polyline points="568,81.1 577.2,93" fill="none" stroke="#008000" stroke-width="2.9"/>
<polyline points="587.8,106.6 593.4,113.8" fill="none" stroke="#008000" stroke-width="4.1"/>
<polygon points="588.8,109.9 592.6,114.8 592.6,117.8 588.8,112.9" fill="#ff0000"/>
<rect x="575.9" y="90.5" width="2.4" height="4.5" fill="#00e000"/>
<rect x="586.6" y="104.4" width="2.4" height="4.5" fill="#00e000"/>
<polyline points="578,79.4 586.7,91" fill="none" stroke="#008000" stroke-width="2.9"/>
<polyline points="596.9,104.6 602.3,111.7" fill="none" stroke="#008000" stroke-width="3.9"/>
<polygon points="597.9,107.8 601.5,112.7 601.5,115.7 597.9,110.8" fill="#ff0000"/>
<rect x="585.4" y="88.6" width="2.4" height="4.5" fill="#00e000"/>
<rect x="595.7" y="102.3" width="2.4" height="4.5" fill="#00e000"/>
<polyline points="587.9,77.6 596.3,89.1" fill="none" stroke="#008000" stroke-width="2.8"/>
<polyline points="606.1,102.6 611.3,109.7" fill="none" stroke="#008000" stroke-width="3.8"/>
<polygon points="607,105.8 610.6,110.7 610.6,113.7 607,108.8" fill="#ff0000"/>
<rect x="594.9" y="86.7" width="2.4" height="4.5" fill="#00e000"/>
<rect x="604.9" y="100.4" width="2.4" height="4.5" fill="#00e000"/>
<polyline points="597.7,75.7 605.8,87.2" fill="none" stroke="#008000" stroke-width="2.8"/>
<polyline points="615.4,100.8 620.3,107.9" fill="none" stroke="#008000" stroke-width="3.7"/>
<polygon points="616.3,104 619.7,108.8 619.7,111.8 616.3,107" fill="#ffd800"/>
<rect x="604.5" y="84.8" width="2.4" height="4.5" fill="#00e000"/>
<rect x="614.2" y="98.6" width="2.4" height="4.5" fill="#00e000"/>
<polyline points="607.6,73.9 615.4,85.4" fill="none" stroke="#008000" stroke-width="2.7"/>
<polyline points="624.7,99.2 629.5,106.3" fill="none" stroke="#008000" stroke-width="3.6"/>
<polygon points="625.5,102.3 628.8,107.2 628.8,110.2 625.5,105.3" fill="#ff0000"/>
<rect x="614.1" y="83" width="2.4" height="4.5" fill="#00e000"/>
<rect x="623.5" y="96.9" width="2.4" height="4.5" fill="#00e000"/>
<polyline points="617.4,72.1 625,83.7" fill="none" stroke="#008000" stroke-width="2.7"/>
<polyline points="634,97.7 638.7,104.9" fill="none" stroke="#008000" stroke-width="3.5"/>
<polygon points="634.9,100.8 638.1,105.7 638.1,108.7 634.9,103.8" fill="#ff0000"/>
<rect x="623.7" y="81.3" width="2.4" height="4.5" fill="#00e000"/>
<rect x="632.8" y="95.4" width="2.4" height="4.5" fill="#00e000"/>
<polyline points="627.3,70.5 634.6,82.2" fill="none" stroke="#008000" stroke-width="2.6"/>
<polyline points="643.3,96.3 647.9,103.6" fill="none" stroke="#008000" stroke-width="3.4"/>
<polygon points="644.2,99.3 647.3,104.3 647.3,107.3 644.2,102.3" fill="#ff0000"/>
<rect x="633.3" y="79.8" width="2.4" height="4.5" fill="#00e000"/>
<rect x="642.1" y="94.1" width="2.4" height="4.5" fill="#00e000"/>
<polyline points="637.2,69.1 644.2,80.8" fill="none" stroke="#008000" stroke-width="2.6"/>
<polyline points="652.6,95.1 657.1,102.5" fill="none" stroke="#008000" stroke-width="3.3"/>
<polygon points="653.4,98.1 656.4,103.1 656.4,106.1 653.4,101.1" fill="#ffd800"/>
<rect x="642.9" y="78.4" width="2.4" height="4.5" fill="#00e000"/>
<rect x="651.4" y="92.8" width="2.4" height="4.5" fill="#00e000"/>
<polyline points="647.1,67.9 653.8,79.6" fill="none" stroke="#008000" stroke-width="2.5"/>
<polyline points="661.9,94 666.2,101.5" fill="none" stroke="#008000" stroke-width="3.2"/>
<polygon points="662.7,96.9 665.6,101.9 665.6,104.9 662.7,99.9" fill="#ff0000"/>
<rect x="652.5" y="77.2" width="2.4" height="4.5" fill="#00e000"/>
<rect x="660.7" y="91.7" width="2.4" height="4.5" fill="#00e000"/>
<polyline points="657,66.7 663.3,78.4" fill="none" stroke="#008000" stroke-width="2.5"/>
<polyline points="671.1,92.9 675.3,100.6" fill="none" stroke="#008000" stroke-width="3.1"/>
<polygon points="671.9,95.8 674.6,100.9 674.6,103.9 671.9,98.8" fill="#ff0000"/>
<rect x="662.1" y="76" width="2.4" height="4.5" fill="#00e000"/>
<rect x="669.9" y="90.7" width="2.4" height="4.5" fill="#00e000"/>
<polyline points="667,65.5 672.9,77.3" fill="none" stroke="#008000" stroke-width="2.4"/>
<polyline points="680.3,91.9 684.2,99.7" fill="none" stroke="#008000" stroke-width="2.9"/>
<polygon points="681,94.8 683.6,99.9 683.6,102.9 681,97.8" fill="#ff0000"/>
<rect x="671.6" y="74.9" width="2.4" height="4.5" fill="#00e000"/>
<rect x="679.1" y="89.7" width="2.4" height="4.5" fill="#00e000"/>
<polyline points="676.9,64.5 682.4,76.3" fill="none" stroke="#008000" stroke-width="2.4"/>
<polyline points="689.3,91 693,98.9" fill="none" stroke="#008000" stroke-width="2.8"/>
<polygon points="690,93.8 692.4,99 692.4,102 690,96.8" fill="#ffd800"/>
<rect x="681.1" y="73.8" width="2.4" height="4.5" fill="#00e000"/>
<rect x="688.1" y="88.8" width="2.4" height="4.5" fill="#00e000"/>
<polyline points="686.9,63.6 691.9,75.4" fill="none" stroke="#008000" stroke-width="2.3"/>
<polyline points="698.2,90.2 701.6,98.2" fill="none" stroke="#008000" stroke-width="2.7"/>
<polygon points="698.8,93 701,98.2 701,101.2 698.8,96" fill="#ff0000"/>
<rect x="690.6" y="72.9" width="2.4" height="4.5" fill="#00e000"/>
<rect x="697" y="88" width="2.4" height="4.5" fill="#00e000"/>
<polyline points="696.9,62.8 701.3,74.6" fill="none" stroke="#008000" stroke-width="2.3"/>
<polyline points="707,89.5 710,97.6" fill="none" stroke="#008000" stroke-width="2.6"/>
<polygon points="707.5,92.2 709.5,97.4 709.5,100.4 707.5,95.2" fill="#ff0000"/>
<rect x="700" y="72.1" width="2.4" height="4.5" fill="#00e000"/>
<rect x="705.8" y="87.3" width="2.4" height="4.5" fill="#00e000"/>
<polyline points="706.8,62.2 710.7,73.9" fill="none" stroke="#008000" stroke-width="2.2"/>
<polyline points="715.6,88.9 718.2,97" fill="none" stroke="#008000" stroke-width="2.5"/>
<polygon points="716,91.5 717.7,96.7 717.7,99.7 716,94.5" fill="#ff0000"/>
<rect x="709.4" y="71.4" width="2.4" height="4.5" fill="#00e000"/>
<rect x="714.4" y="86.6" width="2.4" height="4.5" fill="#00e000"/>
<polygon points="460.2,154.9 464.8,152.6 469.4,150.4 474.1,148.3 478.7,146.2 483.4,144.2 488.1,142.3 492.9,140.5 497.9,138.7 502.9,137 508.1,135.3 513.3,133.7 518.5,132.1 523.8,130.6 529,129 534.2,127.5 539.4,126 544.5,124.4 549.5,122.8 554.6,121.3 559.6,119.7 564.6,118.2 569.6,116.7 574.5,115.2 579.4,113.8 584.4,112.4 589.3,111.1 594.3,109.8 599.3,108.6 604.3,107.4 609.4,106.3 614.6,105.2 619.7,104.1 624.9,103.1 630.1,102.2 635.3,101.3 640.6,100.5 645.8,99.7 651,99 656.2,98.3 661.4,97.6 666.6,97 671.8,96.4 676.9,95.8 682,95.2 687.1,94.7 692.1,94.2 697.1,93.7 702,93.2 706.8,92.8 711.6,92.4 716.4,92 721.1,91.6 725.7,91.3 729.8,91 733.3,90.7 736.3,90.5 739,90.3 741.5,90.2 743.9,90 742.4,95.6 740.6,95.7 738.7,95.8 736.5,95.9 734,96 730.9,96.2 727.1,96.4 722.6,96.7 718.1,97 713.4,97.3 708.7,97.7 704,98 699.1,98.4 694.2,98.8 689.3,99.3 684.3,99.7 679.2,100.2 674.1,100.7 669,101.2 663.8,101.8 658.6,102.3 653.4,103 648.2,103.6 643,104.3 637.7,105 632.5,105.8 627.3,106.7 622.1,107.6 617,108.6 611.8,109.6 606.8,110.7 601.7,111.8 596.7,113 591.7,114.2 586.8,115.5 581.8,116.8 576.9,118.1 571.9,119.5 566.9,121 561.9,122.4 556.9,123.9 551.8,125.4 546.6,126.9 541.5,128.3 536.3,129.7 531,131.2 525.7,132.6 520.4,134.1 515.1,135.6 509.8,137.1 504.6,138.7 499.5,140.3 494.5,142 489.6,143.7 484.8,145.5 480.1,147.5 475.4,149.4 470.7,151.5 466,153.7 461.3,155.9" fill="#008000" fill-opacity=".6"/>
<polyline points="23.5,550 25.1,546 26.7,542.1 28.4,538.2 30.1,534.2 31.8,530.4 33.6,526.5 35.5,522.6 37.3,518.8 39.2,515 41.1,511.2 43.1,507.4 45.1,503.6 47.1,499.8 49.1,496.1 51.2,492.3 53.3,488.6 55.4,484.9 57.5,481.2 59.6,477.5 61.7,473.8 63.9,470.1 66,466.4 68.2,462.7 70.3,459 72.5,455.3 74.7,451.7 76.9,448 79.1,444.3 81.3,440.7 83.5,437 85.7,433.4 87.9,429.7 90.1,426.1 92.4,422.5 94.6,418.8 96.9,415.2 99.2,411.6 101.5,408 103.8,404.4 106.1,400.9 108.5,397.3 110.8,393.7 113.2,390.2 115.6,386.6 118,383.1 120.4,379.6 122.8,376.1 125.3,372.6 127.7,369.1 130.2,365.6 132.7,362.1 135.1,358.6 137.6,355.2 140.1,351.7 142.6,348.3 145.2,344.8 147.7,341.4 150.2,337.9 152.8,334.5 155.4,331.1 157.9,327.7 160.5,324.3 163.1,320.9 165.8,317.6 168.4,314.2 171.1,310.9 173.8,307.6 176.5,304.3 179.3,301.1 182.1,297.8 184.9,294.6 187.8,291.5 190.7,288.3 193.6,285.2 196.5,282.1 199.5,279.1 202.6,276.1 205.6,273.1 208.7,270.2 211.9,267.3 215,264.4 218.2,261.5 221.3,258.7 224.5,255.8 227.7,253 231,250.2 234.2,247.4 237.4,244.6 240.6,241.8 243.8,239 247,236.1 250.2,233.3 253.4,230.5 256.6,227.6 259.8,224.8 263,222 266.1,219.1 269.3,216.3 272.6,213.5 275.8,210.7 279.1,207.9 282.4,205.2 285.7,202.6 289.1,200 292.6,197.5 296.1,195.1 299.6,192.6 303.1,190.3 306.7,187.9 310.3,185.6 313.9,183.4 317.5,181.1 321.2,178.8 324.8,176.6 328.4,174.4 332.1,172.2 335.8,170 339.4,167.8 343.1,165.7 346.8,163.6 350.5,161.4 354.3,159.3 358,157.3 361.7,155.2 365.5,153.2 369.3,151.2 373,149.2 376.8,147.2 380.6,145.3 384.4,143.4 388.3,141.5 392.1,139.6 396,137.8 399.8,136 403.7,134.1 407.6,132.3 411.4,130.5 415.3,128.7 419.1,126.9 423,125.1 426.9,123.3 430.8,121.6 434.7,119.9 438.7,118.4 442.7,116.9 446.7,115.5 450.8,114.2 454.9,112.9 459,111.6 463,110.4 467.1,109.1 471.2,107.7 475.2,106.4 479.2,105 483.3,103.5 487.3,102.1 491.3,100.7 495.4,99.3 499.4,98 503.5,96.7 507.6,95.5 511.7,94.3 515.8,93.1 519.9,91.9 524,90.7 528.1,89.6 532.2,88.5 536.4,87.5 540.5,86.5 544.7,85.6 548.9,84.7 553,83.9 557.2,83.1 561.4,82.3 565.6,81.6 569.8,80.8 574,80.1 578.2,79.3 582.5,78.6 586.7,77.8 590.8,77 595,76.2 599.2,75.4 603.4,74.6 607.6,73.9 611.8,73.1 616,72.3 620.2,71.6 624.5,71 628.7,70.3 632.9,69.7 637.1,69.1 641.4,68.6 645.6,68.1 649.8,67.5 654.1,67 658.3,66.5 662.6,66 666.8,65.5 671,65.1 675.3,64.7 679.5,64.3 683.8,63.9 688,63.5 692.3,63.2 696.6,62.9 700.8,62.6 705.1,62.3 709.3,62.1 713.6,61.8 717.9,61.6 722.1,61.4 726.4,61.3 730.7,61.1 734.9,61 739.2,60.9 743.5,60.9 747.7,60.8 752,60.8" fill="none" stroke="#008000" stroke-width="8.4"/>
<polyline points="132,561.4 132,561.4 132.4,559.4 133.4,555.7 134.6,552 136.1,548.3 137.7,544.7 139.4,541.1 141.2,537.6 143.1,534 145.1,530.5 147,527 148.8,523.5 150.6,520 152.3,516.5 153.9,512.9 155.5,509.4 157,505.8 158.5,502.3 159.9,498.7 161.3,495.2 162.7,491.6 164.2,488.1 165.6,484.5 167,480.9 168.5,477.4 170,473.8 171.5,470.3 173.1,466.8 174.8,463.3 176.5,459.8 178.3,456.3 180.1,452.8 182,449.4 183.8,445.9 185.7,442.5 187.5,439 189.3,435.5 191.1,432 192.8,428.6 194.6,425.1 196.3,421.6 198.1,418.2 199.8,414.7 201.5,411.2 203.3,407.8 205,404.3 206.8,400.8 208.6,397.4 210.5,394 212.3,390.6 214.2,387.2 216.2,383.8 218.1,380.4 220.2,377 222.2,373.7 224.3,370.4 226.4,367 228.6,363.7 230.8,360.5 233,357.2 235.2,353.9 237.4,350.7 239.6,347.4 241.9,344.2 244.1,341 246.4,337.8 248.6,334.6 250.8,331.4 253.1,328.2 255.3,325.1 257.6,321.9 259.9,318.8 262.1,315.7 264.4,312.7 266.7,309.6 269,306.6 271.3,303.6 273.6,300.6 275.9,297.6 278.3,294.7 280.6,291.8 283,288.9 285.4,286 287.8,283.2 290.3,280.3 292.8,277.5 295.3,274.7 297.9,271.9 300.5,269.2 303.1,266.4 305.8,263.7 308.5,260.9 311.2,258.2 313.9,255.5 316.7,252.8 319.4,250.1 322.2,247.4 324.9,244.7 327.7,242 330.4,239.3 333.3,236.7 336.1,234.1 339,231.6 342,229.1 345,226.7 348,224.4 351.1,222.1 354.2,219.9 357.4,217.7 360.7,215.6 364,213.5 367.2,211.4 370.5,209.3 373.7,207.2 376.9,205 380,202.8 383,200.6 385.9,198.3 388.9,196.1 391.9,193.9 394.9,191.7 398.1,189.6 401.3,187.6 404.5,185.6 407.8,183.6 411.2,181.7 414.5,179.8 417.9,177.9 421.3,176.1 424.8,174.3 428.2,172.5 431.6,170.7 435,169 438.5,167.2 441.9,165.5 445.4,163.7 448.8,162 452.3,160.2 455.8,158.5 459.3,156.8" fill="none" stroke="#008000" stroke-width="4"/>
<polyline points="431.6,170.7 435,169 438.5,167.2 441.9,165.5 445.4,163.7 448.8,162 452.3,160.2 455.8,158.5 459.3,156.8 462.8,155.1 466.4,153.5 469.9,151.9 473.5,150.3 477,148.8 480.5,147.3 484.1,145.8 487.7,144.4 491.3,143.1 495,141.8 498.7,140.5 502.6,139.3 506.4,138.1 510.4,136.9 514.4,135.8 518.4,134.6 522.4,133.5 526.4,132.4 530.3,131.4 534.3,130.3 538.2,129.2 542.2,128.1 546,127 549.9,125.9 553.8,124.8 557.6,123.7 561.4,122.6 565.2,121.5 568.9,120.4 572.7,119.3 576.4,118.3 580.1,117.2 583.8,116.2 587.5,115.3 591.3,114.3 595,113.4 598.8,112.5 602.5,111.6 606.3,110.8 610.2,109.9 614,109.1 617.9,108.4 621.7,107.7 625.6,107 629.5,106.3 633.5,105.7 637.4,105.1 641.3,104.5 645.3,104 649.2,103.5 653.1,103 657,102.5 660.9,102.1 664.8,101.7 668.7,101.2 672.6,100.8 676.4,100.5 680.2,100.1 684,99.7 687.8,99.4 691.6,99 695.3,98.7 699,98.4 702.6,98.1 706.2,97.9 709.8,97.6 713.3,97.3 716.8,97.1 720.3,96.9 723.7,96.6 727,96.4 730,96.3 732.5,96.1 734.6,96 736.5,95.9 738.1,95.8 739.6,95.7 741,95.7 742.4,95.6" fill="none" stroke="#000080" stroke-width="3"/>
</g>
<polygon points="711,62 714.7,61.8 718.5,61.6 722.2,61.4 725.9,61.3 729.6,61.2 733.4,61.1 737.1,61 740.8,60.9 744.5,60.9 748.3,60.8 752,60.8 751.2,63.6 747.7,63.6 744.2,63.6 740.7,63.7 737.1,63.8 733.6,63.9 730,64 726.4,64.1 722.8,64.2 719.2,64.4 715.5,64.6 711.9,64.7" fill="#008000"/>
<polygon points="711.9,64.7 715.5,64.6 719.2,64.4 722.8,64.2 726.4,64.1 730,64 733.6,63.9 737.1,63.8 740.7,63.7 744.2,63.6 747.7,63.6 751.2,63.6 749.5,69.8 746.4,69.9 743.4,69.9 740.3,70 737.2,70 734,70.1 730.8,70.2 727.6,70.4 724.2,70.5 720.8,70.6 717.3,70.8 713.8,71" fill="#008c8c"/>
<polygon points="713.8,71 717.3,70.8 720.8,70.6 724.2,70.5 727.6,70.4 730.8,70.2 734,70.1 737.2,70 740.3,70 743.4,69.9 746.4,69.9 749.5,69.8 746,82.4 743.9,82.4 741.7,82.5 739.5,82.5 737.2,82.6 734.9,82.7 732.4,82.8 729.8,82.9 727.1,83 724.1,83.2 720.8,83.4 717.6,83.5" fill="#00008c"/>
<polygon points="717.6,83.5 720.8,83.4 724.1,83.2 727.1,83 729.8,82.9 732.4,82.8 734.9,82.7 737.2,82.6 739.5,82.5 741.7,82.5 743.9,82.4 746,82.4 744.9,86.6 743,86.6 741.2,86.7 739.3,86.7 737.3,86.8 735.2,86.9 733,87 730.6,87.1 728,87.2 725.1,87.4 722,87.5 718.9,87.7" fill="#008c8c"/>
<polygon points="718.9,87.7 722,87.5 725.1,87.4 728,87.2 730.6,87.1 733,87 735.2,86.9 737.3,86.8 739.3,86.7 741.2,86.7 743,86.6 744.9,86.6 744.3,88.6 742.6,88.7 740.9,88.7 739.1,88.8 737.3,88.9 735.3,89 733.2,89.1 731,89.2 728.5,89.3 725.7,89.4 722.6,89.6 719.5,89.8" fill="#008000"/>
<polygon points="719.5,89.8 722.6,89.6 725.7,89.4 728.5,89.3 731,89.2 733.2,89.1 735.3,89 737.3,88.9 739.1,88.8 740.9,88.7 742.6,88.7 744.3,88.6 743.2,92.8 741.8,92.9 740.4,92.9 738.9,93 737.3,93.1 735.6,93.1 733.8,93.2 731.7,93.3 729.4,93.5 726.8,93.6 723.8,93.8 720.8,94" fill="#008c8c"/>
<polygon points="720.8,94 723.8,93.8 726.8,93.6 729.4,93.5 731.7,93.3 733.8,93.2 735.6,93.1 737.3,93.1 738.9,93 740.4,92.9 741.8,92.9 743.2,92.8 742.4,95.6 741.2,95.7 740,95.7 738.7,95.8 737.3,95.9 735.8,95.9 734.2,96 732.2,96.1 730,96.3 727.5,96.4 724.6,96.6 721.6,96.8" fill="#00008c"/>
<polyline points="719,61.6 727.9,96.4" fill="none" stroke="#008000" stroke-width="1.2"/>
<polyline points="730,61.2 734.3,96" fill="none" stroke="#008000" stroke-width="1.2"/>
<polyline points="741,60.9 738.8,95.8" fill="none" stroke="#008000" stroke-width="1.2"/>
<polygon points="735.5,76.5 739,77 733.5,92 730,91.5" fill="#ff30ff" stroke="#ff20ff" stroke-width="1" fill-opacity=".5"/>
<polygon points="62.9,551.6 74.6,543 78.5,555.5 71,572.3" fill="#0000ff"/>
<polygon points="78.5,555.5 116,562.5 112,575 71,572.3" fill="#00008c"/>
<polyline points="87.5,556.5 81.5,573" fill="none" stroke="#00c8c8" stroke-width="1.1" stroke-dasharray="1.5 1.5"/>
<polyline points="94.1,557.7 88.1,573.3" fill="none" stroke="#00c8c8" stroke-width="1.1" stroke-dasharray="1.5 1.5"/>
<polyline points="100.7,558.9 94.7,573.6" fill="none" stroke="#00c8c8" stroke-width="1.1" stroke-dasharray="1.5 1.5"/>
<polyline points="107.3,560.1 101.3,573.9" fill="none" stroke="#00c8c8" stroke-width="1.1" stroke-dasharray="1.5 1.5"/>
<polyline points="113.9,561.3 107.9,574.2" fill="none" stroke="#00c8c8" stroke-width="1.1" stroke-dasharray="1.5 1.5"/>
<polygon points="72,535.3 109.4,544.2 115.7,562.2 79.8,555.2" fill="#c87800"/>
<polygon points="86,538.6 98,541.6 105,560.2 92.5,557.7" fill="#a000a0"/>
<polyline points="79.8,555.2 115.7,562.2" fill="none" stroke="#ffd000" stroke-width="1"/>
<line x1="91.5" y1="592.4" x2="105.5" y2="611" stroke="#00e000" stroke-width="1.4"/>
<line x1="114.8" y1="603" x2="119" y2="611" stroke="#0000ff" stroke-width="1.6"/>
<line x1="168" y1="611" x2="192" y2="591" stroke="#ff0000" stroke-width="1.2"/>
<polygon points="192,591 184.5,594 182,599.5 186,599" fill="none" stroke="#ff0000" stroke-width="1"/>
<text x="80.5" y="584.5" font-family="Liberation Sans,sans-serif" font-size="13" fill="#00e000" transform="rotate(-20 85 579)">Y</text>
<text x="108.5" y="599.5" font-family="Liberation Sans,sans-serif" font-size="17" fill="#0000ff" transform="rotate(-20 114 591)">Z</text>
<text x="192.5" y="586" font-family="Liberation Sans,sans-serif" font-size="17" fill="#ff0000" transform="rotate(40 198.2 580)">X</text></svg>
</div>
<div id="status">
<div class="abs" style="left:518px;top:2px;width:486px;height:17px;border-top:1px solid #a0a0a0;border-left:1px solid #a0a0a0;border-right:1px solid #fff"></div>
<svg class="abs" style="left:1007px;top:5px" width="14" height="14"><use href="#ic-grip"/></svg>
</div>
<span class="tx" id="t1" style="left:30.0px;top:8.0px;font-size:12px;color:#000;transform:scaleX(0.9999)">鋼橋３次元情報変換</span>
<span class="tx" id="t2" style="left:138.0px;top:8.0px;font-size:12px;color:#000;transform:scaleX(0.7662)">システム</span>
<span class="tx" id="t3" style="left:178.5px;top:8.0px;font-size:12px;color:#000;transform:scaleX(1.0000)">-</span>
<span class="tx" id="t4" style="left:186.0px;top:8.0px;font-size:12px;color:#000;transform:scaleX(0.9507)">[SampleB.3dm]</span>
<span class="tx" id="m1" style="left:30.8px;top:31.0px;font-size:12px;color:#000;transform:scaleX(0.7483)">ファイル(<u>F</u>)</span>
<span class="tx" id="m2" style="left:93.8px;top:31.0px;font-size:12px;color:#000;transform:scaleX(0.9121)">編集(<u>E</u>)</span>
<span class="tx" id="m3" style="left:145.0px;top:31.0px;font-size:12px;color:#000;transform:scaleX(0.9496)">表示(<u>V</u>)</span>
<span class="tx" id="m4" style="left:198.5px;top:31.0px;font-size:12px;color:#000;transform:scaleX(0.9361)">実行(<u>G</u>)</span>
<span class="tx" id="m5" style="left:252.3px;top:31.0px;font-size:12px;color:#000;transform:scaleX(0.7564)">ウィンドウ(<u>W</u>)</span>
<span class="tx" id="m6" style="left:327.5px;top:31.0px;font-size:12px;color:#000;transform:scaleX(0.8354)">ヘルプ(<u>H</u>)</span>
<span class="tx" id="b1" style="left:238.2px;top:91.0px;font-size:12px;color:#000;transform:scaleX(0.9939)">描画の詳細設定</span>
<span class="tx" id="b2" style="left:356.8px;top:91.0px;font-size:12px;color:#000;transform:scaleX(0.9913)">全体表示</span>
<span class="tx" id="s1" style="left:2.5px;top:750.0px;font-size:11px;color:#000;transform:scaleX(0.9545)">ﾍﾙﾌﾟ</span>
<span class="tx" id="s2" style="left:27.8px;top:750.0px;font-size:12px;color:#000;transform:scaleX(0.8213)">を表示するには</span>
<span class="tx" id="s3" style="left:101.0px;top:750.0px;font-size:12px;color:#000;transform:scaleX(0.9191)">[F1]</span>
<span class="tx" id="s4" style="left:124.5px;top:750.0px;font-size:12px;color:#000;transform:scaleX(0.7224)">を押してください。</span>
<span class="tx" id="r0" style="left:43.1px;top:78.0px;font-size:12px;color:#000;transform:scaleX(1.0018)">基本形状</span>
<span class="tx" id="r1" style="left:61.7px;top:96.0px;font-size:12px;color:#000;transform:scaleX(1.0143)">基本条件</span>
<span class="tx" id="r2" style="left:61.7px;top:114.0px;font-size:12px;color:#000;transform:scaleX(1.0143)">線形座標</span>
<span class="tx" id="r3" style="left:43.1px;top:132.0px;font-size:12px;color:#000;transform:scaleX(1.0243)">共通</span>
<span class="tx" id="r4" style="left:43.1px;top:150.0px;font-size:12px;color:#000;transform:scaleX(1.0243)">主桁</span>
<span class="tx" id="r5" style="left:43.1px;top:168.0px;font-size:12px;color:#000;transform:scaleX(1.0243)">横桁</span>
<span class="tx" id="r6" style="left:43.1px;top:186.0px;font-size:12px;color:#000;transform:scaleX(1.0079)">外縦桁</span>
<span class="tx" id="r7" style="left:43.1px;top:204.0px;font-size:12px;color:#000;transform:scaleX(0.7231)">ブラケット</span>
<span class="tx" id="r8" style="left:43.1px;top:222.0px;font-size:12px;color:#000;transform:scaleX(0.9123)">確認図・印刷</span>
<span class="tx" id="r9" style="left:61.7px;top:240.0px;font-size:12px;color:#000;transform:scaleX(0.8831)">モデル作成</span>
<span class="tx" id="r10" style="left:61.7px;top:258.0px;font-size:12px;color:#000;transform:scaleX(1.0162)">平面図</span>
<span class="tx" id="r11" style="left:61.7px;top:276.0px;font-size:12px;color:#000;transform:scaleX(1.0097)">桁高変化図</span>
<span class="tx" id="r12" style="left:61.7px;top:294.0px;font-size:12px;color:#000;transform:scaleX(1.0122)">横断面図</span>
<span class="tx" id="r13" style="left:64.3px;top:312.0px;font-size:12px;color:#fff;transform:scaleX(0.9580)">３Ｄ表示</span>
<span class="tx" id="r14" style="left:61.7px;top:330.0px;font-size:12px;color:#000;transform:scaleX(1.0097)">箱桁主桁図</span>
<span class="tx" id="r15" style="left:61.7px;top:348.0px;font-size:12px;color:#000;transform:scaleX(0.7956)">デッキ図</span>
<span class="tx" id="r16" style="left:61.7px;top:366.0px;font-size:12px;color:#000;transform:scaleX(1.0162)">添接図</span>
<span class="tx" id="r17" style="left:61.7px;top:384.0px;font-size:12px;color:#000;transform:scaleX(1.0097)">横断部材図</span>
<span class="tx" id="r18" style="left:61.7px;top:402.0px;font-size:12px;color:#000;transform:scaleX(0.9952)">印刷</span>
<div id="frame"></div>
</body></html>
